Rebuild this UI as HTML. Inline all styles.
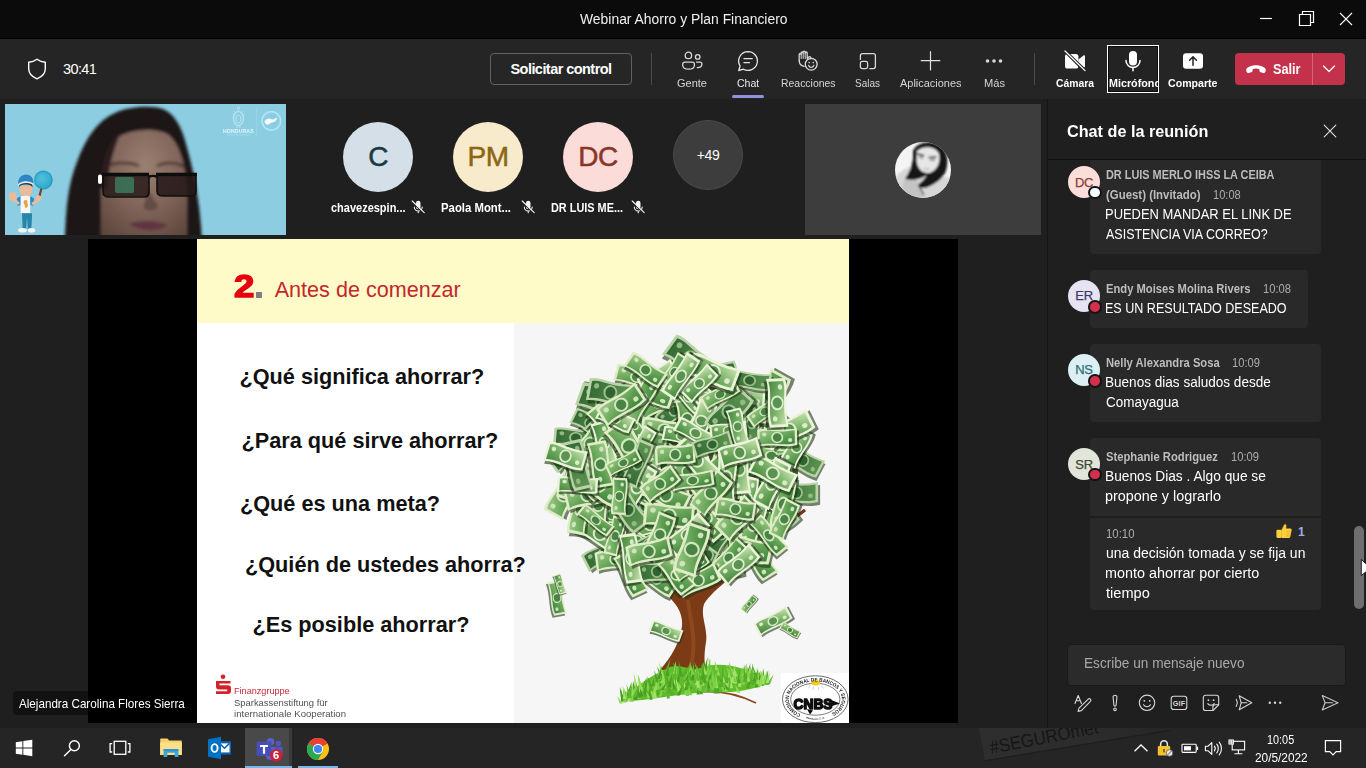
<!DOCTYPE html>
<html lang="es">
<head>
<meta charset="utf-8">
<title>Webinar Ahorro y Plan Financiero</title>
<style>
*{box-sizing:border-box;margin:0;padding:0}
html,body{width:1366px;height:768px;overflow:hidden;background:#1f1f1f}
body{font-family:"Liberation Sans",sans-serif;color:#fff;position:relative;-webkit-font-smoothing:antialiased}
.abs{position:absolute}
.t{position:absolute;white-space:nowrap;line-height:1}
#titlebar{left:0;top:0;width:1366px;height:38px;background:#0b0b0b}
#toolbar{left:0;top:38px;width:1366px;height:61px;background:#252525}
#stage{left:0;top:99px;width:1047px;height:629px;background:#1f1f1f}
#chat{left:1047px;top:99px;width:319px;height:629px;background:#1f1f1f;border-left:1px solid #141414}
#taskbar{left:0;top:728px;width:1366px;height:40px;background:#252525;overflow:hidden}
.tb-label{position:absolute;top:78.200px;font-size:11.500px;color:#d6d6d6;white-space:nowrap;line-height:1}
.tb-label.w{color:#fff;font-weight:bold}
.av{position:absolute;border-radius:50%;display:flex;align-items:center;justify-content:center}
.plabel{position:absolute;top:201px;font-size:13px;font-weight:bold;color:#fff;white-space:nowrap;line-height:1}
.bubble{position:absolute;background:#292929;border-radius:4px}
.mname{position:absolute;font-size:12.500px;font-weight:bold;color:#bdbdbd;white-space:nowrap;line-height:16px}
.mtime{position:absolute;font-size:12px;color:#adadad;white-space:nowrap;line-height:16px}
.mtext{position:absolute;font-size:14px;color:#fff;white-space:nowrap;line-height:20px}
.cav{position:absolute;width:32px;height:32px;border-radius:50%;font-size:13px;-webkit-text-stroke:.25px currentColor;display:flex;align-items:center;justify-content:center;letter-spacing:-0.3px}
.pres{position:absolute;width:9.500px;height:9.500px;border-radius:50%;border:2.200px solid #141414;box-sizing:content-box}
.q{position:absolute;font-weight:bold;color:#111;font-size:21.700px;white-space:nowrap;line-height:26px}
</style>
</head>
<body>
<!-- title bar -->
<div id="titlebar" class="abs">
  <div class="t" style="transform:scaleX(0.9925);transform-origin:0 50%;left:579.500px;top:12.200px;font-size:14px;color:#f0f0f0">Webinar Ahorro y Plan Financiero</div>
  <svg class="abs" style="left:1250px;top:0" width="116" height="38" viewBox="0 0 116 38" fill="none" stroke="#fff" stroke-width="1.2">
    <path d="M10 18.5h12"/>
    <path d="M49.5 14.5h11v11h-11z"/><path d="M52.500 14.500v-3h11v11h-3"/>
    <path d="M90 13l12 12M102 13l-12 12" stroke-width="1.1"/>
  </svg>
</div>
<!-- toolbar -->
<div id="toolbar" class="abs"></div>
<div class="abs" style="left:0;top:38px;width:1366px;height:1px;background:#000"></div>
<div class="abs" style="left:0;top:99px;width:1366px;height:1px;background:#1a1a1a"></div>
<svg class="abs" style="left:26px;top:57px" width="22" height="24" viewBox="0 0 22 24" fill="none" stroke="#fff" stroke-width="1.4" stroke-linejoin="round"><path d="M11 2.200c2.600 2 5.400 2.800 8.300 3v6.300c0 4.800-3.200 8.300-8.300 10.300c-5.100-2-8.300-5.500-8.300-10.300v-6.300c2.900-.2 5.700-1 8.300-3z"/></svg>
<div class="t" style="left:63px;top:62px;font-size:14.5px;color:#fff;letter-spacing:-0.6px">30:41</div>
<div class="abs" style="left:490px;top:53px;width:142px;height:32px;border:1px solid #616161;border-radius:4px;background:#262626"></div>
<div class="t" style="left:561px;top:62px;font-size:14.5px;font-weight:bold;color:#fff;transform:translateX(-50%);letter-spacing:-0.55px">Solicitar control</div>
<div class="abs" style="left:651px;top:53px;width:1px;height:32px;background:#4a4a4a"></div>
<div class="abs" style="left:1034px;top:53px;width:1px;height:32px;background:#4a4a4a"></div>
<!-- toolbar icons -->
<svg class="abs" style="left:680px;top:49px" width="24" height="24" viewBox="0 0 24 24" fill="none" stroke="#d8d8d8" stroke-width="1.3" stroke-linecap="round" stroke-linejoin="round">
  <circle cx="8.400" cy="6.400" r="3.200"/><circle cx="17.700" cy="7.900" r="2.300"/>
  <path d="M4.700 13.200h7.700a2 2 0 0 1 2 2v1c0 2.600-2.300 4-5.900 4s-5.800-1.400-5.800-4v-1a2 2 0 0 1 2-2z"/>
  <path d="M16.600 13.200h3.600a1.700 1.700 0 0 1 1.700 1.700c0 2.400-1.600 3.800-4.600 3.700"/>
</svg>
<div class="tb-label" style="transform:scaleX(0.9576);transform-origin:0 50%;left:677px">Gente</div>
<svg class="abs" style="left:736px;top:49px" width="24" height="24" viewBox="0 0 24 24" fill="none" stroke="#e4e4e4" stroke-width="1.3" stroke-linecap="round" stroke-linejoin="round">
  <path d="M12 2.600a9.400 9.400 0 1 1-4.600 17.600l-4.700 1.300l1.400-4.500A9.400 9.400 0 0 1 12 2.600z"/>
  <path d="M8 9.700h8.200M8 13.700h5.400"/>
</svg>
<div class="tb-label" style="transform:scaleX(0.9178);transform-origin:0 50%;left:736.700px;color:#e8e8e8">Chat</div>
<div class="abs" style="left:732px;top:95px;width:32px;height:3px;background:#9092e0;border-radius:1.500px"></div>
<svg class="abs" style="left:796px;top:49px" width="24" height="24" viewBox="0 0 24 24" fill="none" stroke="#d8d8d8" stroke-width="1.300" stroke-linecap="round" stroke-linejoin="round">
  <path d="M3.200 11.500v-6a1 1 0 0 1 2 0v-1.500a1 1 0 0 1 2 0v-.8a1 1 0 0 1 2 0v.8a1 1 0 0 1 2 0v5.500l1.600-1.500a1.300 1.300 0 0 1 1.900 1.700" />
  <path d="M3.200 11.500c0 3 1.800 5.300 5 5.800"/>
  <path d="M5.200 5.500v4M7.200 4v5.500M9.200 4v5.500" stroke-width="1"/>
  <circle cx="15.200" cy="15.200" r="5.900"/>
  <path d="M12.600 16.400c.6 1.300 1.500 1.900 2.600 1.900s2-.6 2.600-1.900"/>
  <circle cx="13.200" cy="13.600" r=".8" fill="#d8d8d8" stroke="none"/><circle cx="17.200" cy="13.600" r=".8" fill="#d8d8d8" stroke="none"/>
</svg>
<div class="tb-label" style="transform:scaleX(0.9069);transform-origin:0 50%;left:780.500px">Reacciones</div>
<svg class="abs" style="left:856px;top:49px" width="24" height="24" viewBox="0 0 24 24" fill="none" stroke="#d8d8d8" stroke-width="1.300" stroke-linecap="round" stroke-linejoin="round">
  <path d="M4.400 10.400v-3.800a2 2 0 0 1 2-2h11a2 2 0 0 1 2 2v11a2 2 0 0 1-2 2h-3.600"/>
  <rect x="4.400" y="12.400" width="7.200" height="7.200" rx="1.800"/>
</svg>
<div class="tb-label" style="transform:scaleX(0.8686);transform-origin:0 50%;left:855px">Salas</div>
<svg class="abs" style="left:918px;top:49px" width="24" height="24" viewBox="0 0 24 24" fill="none" stroke="#e0e0e0" stroke-width="1.200" stroke-linecap="round"><path d="M12.500 2.500v18.500M3.200 11.700h18.600"/></svg>
<div class="tb-label" style="transform:scaleX(0.9523);transform-origin:0 50%;left:900px">Aplicaciones</div>
<svg class="abs" style="left:982px;top:49px" width="24" height="24" viewBox="0 0 24 24" fill="#d8d8d8"><circle cx="5.500" cy="12" r="1.800"/><circle cx="12" cy="12" r="1.800"/><circle cx="18.500" cy="12" r="1.800"/></svg>
<div class="tb-label" style="transform:scaleX(0.9662);transform-origin:0 50%;left:983.500px">Más</div>
<!-- camera off -->
<svg class="abs" style="left:1063px;top:49px" width="24" height="24" viewBox="0 0 24 24">
  <rect x="2" y="5" width="13.400" height="14.600" rx="2.600" fill="#fff"/>
  <path d="M15.400 10.500l5.400-4.200c.5-.4 1.200 0 1.200.6v10.800c0 .6-.7 1-1.200.6l-5.400-4.200z" fill="#fff"/>
  <path d="M1.600 1.600l20.600 20.400" stroke="#252525" stroke-width="3.400"/>
  <path d="M2 2l20 19.600" stroke="#fff" stroke-width="1.300" stroke-linecap="round"/>
</svg>
<div class="tb-label w" style="transform:scaleX(0.9004);transform-origin:0 50%;left:1056px">Cámara</div>
<!-- mic box -->
<div class="abs" style="left:1107px;top:45px;width:52px;height:48px;border:1px solid #fff;background:#232323;box-shadow:inset 0 0 0 1px #0b0b0b;overflow:hidden">
  <div class="tb-label w" style="transform:scaleX(0.9356);transform-origin:0 50%;left:.5px;top:32.200px">Micrófono</div>
</div>
<svg class="abs" style="left:1121px;top:49px" width="24" height="24" viewBox="0 0 24 24" fill="none">
  <rect x="8" y="2" width="8" height="14.600" rx="4" fill="#fff"/>
  <path d="M5 11.500a7 7 0 0 0 14 0" stroke="#fff" stroke-width="1.500" stroke-linecap="round"/>
  <path d="M12 18.500v3.200" stroke="#fff" stroke-width="1.500" stroke-linecap="round"/>
</svg>
<!-- share -->
<svg class="abs" style="left:1181px;top:49px" width="24" height="24" viewBox="0 0 24 24">
  <rect x="2" y="4.200" width="20" height="15.600" rx="3" fill="#fff"/>
  <path d="M12 16.200v-8.200M8.600 11.200l3.400-3.400l3.400 3.400" stroke="#252525" stroke-width="1.500" fill="none" stroke-linecap="round" stroke-linejoin="round"/>
</svg>
<div class="tb-label w" style="transform:scaleX(0.9220);transform-origin:0 50%;left:1168px">Comparte</div>
<!-- leave -->
<div class="abs" style="left:1235px;top:53px;width:110px;height:32px;background:#c4314b;border-radius:4px"></div>
<div class="abs" style="left:1312px;top:53px;width:1px;height:32px;background:#d4667a"></div>
<svg class="abs" style="left:1245px;top:61px" width="22" height="18" viewBox="0 0 22 18" fill="#fff"><path d="M1.300 9.800c-.5-1.500.4-3 2.300-3.900c4.500-2.100 10.300-2.100 14.800 0c1.900.9 2.800 2.400 2.300 3.900l-.4 1.100c-.3.800-1.100 1.200-1.900 1l-2.700-.7c-.7-.2-1.200-.8-1.300-1.500l-.2-1.600c-2-.7-4.400-.7-6.400 0l-.2 1.600c-.1.700-.6 1.300-1.300 1.500l-2.700.7c-.8.200-1.600-.2-1.900-1z"/></svg>
<div class="t" style="transform:scaleX(0.9058);transform-origin:0 50%;left:1273px;top:62.250px;font-size:14px;font-weight:bold;color:#fff">Salir</div>
<svg class="abs" style="left:1322px;top:63px" width="14" height="12" viewBox="0 0 14 12" fill="none" stroke="#fff" stroke-width="1.300" stroke-linecap="round" stroke-linejoin="round"><path d="M1.500 3l5.500 5.500l5.500-5.500"/></svg>
<div id="stage" class="abs"></div>
<!-- webcam tile -->
<svg class="abs" style="left:5px;top:104px" width="281" height="131" viewBox="0 0 281 131">
  <defs>
    <filter id="bl" x="-10%" y="-10%" width="120%" height="120%"><feGaussianBlur stdDeviation="1.600"/></filter>
    <filter id="bl2" x="-20%" y="-20%" width="140%" height="140%"><feGaussianBlur stdDeviation="0.700"/></filter>
    <clipPath id="vc"><rect width="281" height="131"/></clipPath>
    <radialGradient id="fg" cx="0.52" cy="0.32" r="0.8"><stop offset="0" stop-color="#9a8070"/><stop offset=".5" stop-color="#80645a"/><stop offset="1" stop-color="#5c443c"/></radialGradient>
    <radialGradient id="bal" cx="0.4" cy="0.4" r="0.7"><stop offset="0" stop-color="#52bfdc"/><stop offset="1" stop-color="#2fa8cc"/></radialGradient>
  </defs>
  <rect width="281" height="131" fill="#8ccde1"/>
  <g clip-path="url(#vc)">
  <g filter="url(#bl)">
    <path d="M60 136C61 100 64 78 72 58C80 36 92 16 112 8C124 3 146 1 158 5C170 10 177 24 181 40C188 64 195 96 197 136z" fill="#1e1618"/>
    <path d="M96 136V80C97 60 102 44 112 34C124 25 152 23 164 31C176 42 180 62 182 84V136z" fill="url(#fg)"/>
    <path d="M96 84C96 56 102 38 116 28C108 46 104 62 102 86z" fill="#2a1e1f"/>
    <path d="M102 62C110 58 126 58 134 62M152 62C160 58 172 58 180 63" stroke="#3a2826" stroke-width="3" fill="none" opacity=".7"/>
    <path d="M124 120C134 116 152 116 162 121C156 128 134 128 124 120z" fill="#5e3540"/>
    <path d="M142 84C142 96 136 102 140 105C146 108 152 106 153 102z" fill="#4a3430" opacity=".55"/>
  </g>
  <g filter="url(#bl2)">
    <path d="M98 71h46v17c0 3-2 4.500-5 4.500H104c-4 0-6-2-6-5z" fill="#231b1a" opacity=".82"/>
    <path d="M152 71h39v16c0 3-2 5-5 5H158c-4 0-6-2-6-5z" fill="#231b1a" opacity=".86"/>
    <path d="M97 70.500h47M151 70.500h41" stroke="#0f0c0c" stroke-width="3.400"/>
    <path d="M98 71v17c0 3 2 5 6 5h35c3 0 5-1.500 5-4.500V71M152 71v16c0 3 2 5 6 5h28c3 0 5-2 5-5V71" stroke="#120e0e" stroke-width="1.600" fill="none"/>
    <path d="M144 73c2-1.500 6-1.500 8 0" stroke="#0f0c0c" stroke-width="2.400" fill="none"/>
    <rect x="110" y="73" width="19" height="16" rx="2" fill="#3f9a70" opacity=".62"/>
    <rect x="93" y="70.500" width="4" height="9.500" rx="2" fill="#fff"/>
  </g>
  <!-- mascot -->
  <g filter="url(#bl2)">
    <circle cx="38.400" cy="76" r="9.400" fill="#2a9dc2"/>
    <circle cx="38.400" cy="76" r="8" fill="url(#bal)"/>
    <path d="M36.200 85.500l-1.600 6" stroke="#7a3f22" stroke-width="2.200" stroke-linecap="round"/>
    <path d="M14.500 82c-.5 4 .5 8 3 10.200c2 1.600 5 1.600 7 0c2.400-2.200 3.300-6.200 2.800-10.200z" fill="#e9bb9c"/>
    <path d="M14 83.500c0-2.500 .5-4 1.500-5h10.500c1 1 1.500 2.500 1.500 5c-1-2-2.500-3-6.800-3s-5.700 1-6.700 3z" fill="#4a2e22"/>
    <path d="M13.200 80c-.6-6 3.500-9.500 8-9.500s7.800 3.500 7 9c-2-1.600-5-2.300-8-2.200c-3 0-5.400 1-7 2.700z" fill="#2e86c4"/>
    <path d="M12.800 80.800c2-2.400 5-3.400 8-3.400s5.600.8 7.600 2.400l-.3 1.200c-2-1.300-4.500-1.900-7.300-1.900c-3 0-5.600.9-7.400 2.800z" fill="#e8f2fa"/>
    <path d="M12 94.500c1.400-1.400 2.600-1.800 3.800-1.800v8l-3 1.200c-1-2.500-1.300-5-.8-7.400zM28.800 94.500c-1.400-1.400-2.600-1.800-3.800-1.800v8l3 1.200c1-2.500 1.300-5 .8-7.400z" fill="#2e86c4"/>
    <path d="M15.600 92.600c3-1 6.600-1 9.600 0v16.700h-9.600z" fill="#f6f6f6"/>
    <path d="M19.200 96.500c2-1.500 4 .2 3 2.400c1.400 1.400 .8 4.400-1.200 5c-1.600-.4-1-2.600-1.800-3.800c-.8-1.200-.8-2.600 0-3.600z" fill="#e9a23b"/>
    <path d="M13 99l-6-5.500" stroke="#e9bb9c" stroke-width="3" stroke-linecap="round"/>
    <ellipse cx="7.800" cy="92.600" rx="4" ry="4.600" fill="#e9bb9c"/>
    <path d="M28 99.500l5-3.500" stroke="#e9bb9c" stroke-width="3" stroke-linecap="round"/>
    <circle cx="33.500" cy="94" r="2.800" fill="#e9bb9c"/>
    <path d="M17 109.300h10v3l-.6 12.500h-3.600l-.8-11l-.8 11h-3.600z" fill="#2a85aa"/>
    <ellipse cx="17.400" cy="126.300" rx="4.300" ry="2.300" fill="#f4f4f4"/><ellipse cx="26.600" cy="126.300" rx="3.600" ry="2.300" fill="#f4f4f4"/>
  </g>
  </g>
  <!-- logos -->
  <g filter="url(#bl2)">
  <g fill="none" stroke="#d6f6ff" opacity=".6">
    <path d="M233.400 2.500l1.400 2.500l-1.400 1.500l-1.400-1.500z" stroke-width=".8"/>
    <path d="M229 7l1 1.500M238 7l-1 1.500M227.500 10.500l1.500.8M239.500 10.500l-1.500.8" stroke-width=".7"/>
    <ellipse cx="233.400" cy="14.500" rx="5" ry="7" stroke-width="1.200"/>
    <ellipse cx="233.400" cy="15" rx="2.600" ry="4" stroke-width=".9"/>
    <path d="M231 23h5" stroke-width=".8"/>
    <path d="M251.600 4v27" stroke-width=".6" opacity=".6"/>
  </g>
  <circle cx="266.300" cy="16.900" r="9.300" fill="none" stroke="#b4ecfa" stroke-width="1.700" opacity=".85"/>
  <path d="M259.500 17.500c1.500-3 4-3.600 6-2.600s3.500.4 6.500-1.400c0 2.400-1.500 4.200-4 4.800s-3.500 1.800-5 2.400s-3-1.200-3.500-3.200z" fill="#fff" opacity=".9"/>
  </g>
  <text x="233.400" y="28.700" font-family="Liberation Sans, sans-serif" font-weight="bold" font-size="5.200" fill="#e9fbff" text-anchor="middle" letter-spacing=".1" opacity=".9">HONDURAS</text>
  <rect x="222" y="30.600" width="23" height=".7" fill="#d6f6ff" opacity=".5"/>
</svg>
<!-- participants -->
<div class="av" style="left:343px;top:122px;width:70px;height:70px;background:#d4dfe8"><span style="font-size:28px;color:#173c44;letter-spacing:-.5px;-webkit-text-stroke:.5px #173c44">C</span></div>
<div class="av" style="left:453px;top:122px;width:70px;height:70px;background:#f8ebcb"><span style="font-size:28px;color:#8b6614;letter-spacing:-.5px;-webkit-text-stroke:.5px #8b6614">PM</span></div>
<div class="av" style="left:563px;top:122px;width:70px;height:70px;background:#fbdcd8"><span style="font-size:28px;color:#8a3528;letter-spacing:-.5px;-webkit-text-stroke:.5px #8a3528">DC</span></div>
<div class="av" style="left:673px;top:120px;width:70px;height:70px;background:#3d3d3d;border:1px solid #4a4a4a"><span style="font-size:14px;color:#fff;letter-spacing:-.4px">+49</span></div>
<div class="plabel" style="transform:scaleX(0.8451);transform-origin:0 50%;left:330.500px">chavezespin...</div>
<div class="plabel" style="transform:scaleX(0.8731);transform-origin:0 50%;left:440.500px">Paola Mont...</div>
<div class="plabel" style="transform:scaleX(0.8377);transform-origin:0 50%;left:550.500px">DR LUIS ME...</div>
<svg width="0" height="0" style="position:absolute"><defs>
  <g id="micoff" fill="none" stroke="#f0f0f0" stroke-width="1.100" stroke-linecap="round">
    <rect x="5" y=".700" width="4.500" height="8.600" rx="2.250" fill="#f4f4f4" stroke="none"/>
    <path d="M3.300 7a3.950 3.950 0 0 0 7.900 0M7.250 11.200v1.600"/>
    <path d="M.5 1.600l12.200 11.750" stroke="#1f1f1f" stroke-width="1.300"/>
    <path d="M1.200 1l12 11.600" stroke-width="1.150"/>
  </g></defs></svg>
<svg class="abs" style="left:411px;top:200px" width="16" height="16" viewBox="0 0 16 16"><use href="#micoff"/></svg>
<svg class="abs" style="left:521px;top:200px" width="16" height="16" viewBox="0 0 16 16"><use href="#micoff"/></svg>
<svg class="abs" style="left:631px;top:200px" width="16" height="16" viewBox="0 0 16 16"><use href="#micoff"/></svg>
<!-- avatar tile -->
<div class="abs" style="left:805px;top:104px;width:236px;height:131px;background:#3d3d3d"></div>
<svg class="abs" style="left:895px;top:142px" width="56" height="56" viewBox="0 0 56 56">
  <defs><clipPath id="pc"><circle cx="28" cy="28" r="28"/></clipPath>
  <filter id="bl3" x="-20%" y="-20%" width="140%" height="140%"><feGaussianBlur stdDeviation="0.900"/></filter></defs>
  <g clip-path="url(#pc)">
    <rect width="56" height="56" fill="#f4f4f4"/>
    <g filter="url(#bl3)">
      <path d="M0 36C6 28 14 24 20 24L34 32L56 36V56H0z" fill="#d6d6d6"/>
      <path d="M8 40C14 34 22 36 26 44L30 56H6z" fill="#c4c4c4"/>
      <path d="M18 9C22 0 38 -3 47 5C54 12 53 24 50 31C46 38 40 42 33 45C28 47 24 46 23 43C26 40 30 37 32 33C26 37 18 39 10 37C14 31 17 24 18 17z" fill="#141414"/>
      <path d="M22 9C28 3 41 4 44 12C46 20 42 29 34 31C27 32 22 26 21.500 18z" fill="#e6e6e6"/>
      <path d="M23 12l5.500 1.600M34 15.500l6.500-.3" stroke="#1c1c1c" stroke-width="1.700" stroke-linecap="round"/>
      <path d="M24.500 15l3 .8M35.500 18l4-.2" stroke="#444" stroke-width="1.200" stroke-linecap="round"/>
      <path d="M29 26.500c2 1 4 1 5.500 .3" stroke="#999" stroke-width="1" fill="none"/>
      <path d="M24 44l5 9" stroke="#3a3a3a" stroke-width="1.300"/>
    </g>
  </g>
</svg>
<!-- shared content -->
<div class="abs" style="left:88px;top:239px;width:870px;height:484px;background:#000"></div>
<div class="abs" style="left:197px;top:239px;width:652px;height:484px;background:#fff"></div>
<div class="abs" style="left:197px;top:239px;width:652px;height:84px;background:#fffbc8"></div>
<div class="abs" style="left:513.500px;top:323px;width:335.500px;height:400px;background:#f6f6f6"></div>
<svg class="abs" style="left:514px;top:323px" width="335" height="400" viewBox="0 0 335 400">
<defs><linearGradient id="bg1" x1="0" y1="0" x2="1" y2="1"><stop offset="0" stop-color="#9ccb86"/><stop offset=".5" stop-color="#68a659"/><stop offset="1" stop-color="#3a7f38"/></linearGradient><linearGradient id="bg2" x1="0" y1="1" x2="1" y2="0"><stop offset="0" stop-color="#46883f"/><stop offset=".55" stop-color="#7cb46a"/><stop offset="1" stop-color="#c6e2ae"/></linearGradient><linearGradient id="bg3" x1="0" y1="0" x2="1" y2="0"><stop offset="0" stop-color="#356b35"/><stop offset="1" stop-color="#5b9350"/></linearGradient><g id="bill"><path d="M-17 -7.500C-9 -10.500 -2 -5.500 17 -8.500V7.500C6 10.500 -6 5.500 -17 8.500z" fill="#1a3314" opacity=".6" transform="translate(1.600 2.200)"/><path d="M-17 -7.500C-9 -10.500 -2 -5.500 17 -8.500V7.500C6 10.500 -6 5.500 -17 8.500z" fill="#e0ecc6"/><path d="M-15 -5.800C-8 -8.300 -2 -3.800 15 -6.600V5.800C6 8.400 -6 3.800 -15 6.600z" fill="url(#bg1)"/><ellipse cx="0" cy="0" rx="5.200" ry="5.400" fill="#d3e6bf"/><ellipse cx="0" cy="0" rx="3.700" ry="4" fill="#4a8444"/><circle cx="-11" cy="-3" r="1.900" fill="#cfe3bb"/><circle cx="11" cy="2.500" r="1.900" fill="#cfe3bb"/></g><g id="bill2"><path d="M-17 -7.500C-9 -10.500 -2 -5.500 17 -8.500V7.500C6 10.500 -6 5.500 -17 8.500z" fill="#1a3314" opacity=".6" transform="translate(1.600 2.200)"/><path d="M-17 -7.500C-9 -10.500 -2 -5.500 17 -8.500V7.500C6 10.500 -6 5.500 -17 8.500z" fill="#ebf3d8"/><path d="M-15 -5.800C-8 -8.300 -2 -3.800 15 -6.600V5.800C6 8.400 -6 3.800 -15 6.600z" fill="url(#bg2)"/><ellipse cx="0" cy="0" rx="5.200" ry="5.400" fill="#deecce"/><ellipse cx="0" cy="0" rx="3.700" ry="4" fill="#5a9350"/><circle cx="-11" cy="-3" r="1.900" fill="#dbeacb"/><circle cx="11" cy="2.500" r="1.900" fill="#dbeacb"/></g><g id="bill3"><path d="M-17 -7.500C-9 -10.500 -2 -5.500 17 -8.500V7.500C6 10.500 -6 5.500 -17 8.500z" fill="#1a3314" opacity=".6" transform="translate(1.600 2.200)"/><path d="M-17 -7.500C-9 -10.500 -2 -5.500 17 -8.500V7.500C6 10.500 -6 5.500 -17 8.500z" fill="#b9d3a6"/><path d="M-15 -5.800C-8 -8.300 -2 -3.800 15 -6.600V5.800C6 8.400 -6 3.800 -15 6.600z" fill="url(#bg3)"/><ellipse cx="0" cy="0" rx="5.200" ry="5.400" fill="#9dc08c"/><ellipse cx="0" cy="0" rx="3.700" ry="4" fill="#2f6331"/><circle cx="-11" cy="-3" r="1.900" fill="#94b884"/><circle cx="11" cy="2.500" r="1.900" fill="#94b884"/></g><filter id="tb" x="-5%" y="-5%" width="110%" height="110%"><feGaussianBlur stdDeviation="0.550"/></filter></defs>
<g filter="url(#tb)">
<path d="M186.0 369.0C208.0 367.0 226.0 372.0 242.0 380.0" stroke="#8a4a1e" stroke-width="1.600" fill="none"/>
<path d="M146.0 347.0C158.0 333.0 166.0 319.0 168.0 303.0C169.0 289.0 162.0 281.0 154.0 273.0C142.0 261.0 122.0 249.0 92.0 233.0L96.0 225.0C126.0 237.0 148.0 247.0 166.0 259.0C170.0 243.0 176.0 225.0 178.0 197.0L186.0 197.0C186.0 225.0 184.0 243.0 184.0 261.0C198.0 249.0 222.0 237.0 256.0 217.0L260.0 225.0C230.0 245.0 202.0 263.0 190.0 281.0C186.0 293.0 194.0 305.0 192.0 319.0C190.0 331.0 190.0 339.0 192.0 349.0z" fill="#7a3a14"/>
<path d="M176.0 345.0C184.0 321.0 176.0 297.0 174.0 277.0" stroke="#9a5424" stroke-width="4" fill="none" opacity=".6"/>
<path d="M106.0 379.0C116.0 367.0 136.0 353.0 154.0 345.0C166.0 339.0 176.0 349.0 186.0 345.0C206.0 337.0 236.0 345.0 256.0 359.0C242.0 367.0 216.0 371.0 192.0 369.0C166.0 371.0 136.0 377.0 106.0 379.0z" fill="#5fbd2c"/>
<path d="M172.3 361.6L173.6 345.4L175.7 361.6z" fill="#7ed047"/>
<path d="M132.6 368.2L137.3 354.9L136.0 368.2z" fill="#6cc437"/>
<path d="M171.4 350.7L177.0 338.3L174.8 350.7z" fill="#5cb82e"/>
<path d="M193.4 356.5L197.5 344.9L196.8 356.5z" fill="#4da324"/>
<path d="M197.5 366.8L194.6 359.2L200.9 366.8z" fill="#7ed047"/>
<path d="M194.0 365.6L196.7 355.3L197.4 365.6z" fill="#7ed047"/>
<path d="M182.1 363.0L185.5 351.0L185.5 363.0z" fill="#4a9c22"/>
<path d="M202.2 356.6L208.2 344.1L205.6 356.6z" fill="#6cc437"/>
<path d="M210.1 354.4L209.6 345.1L213.5 354.4z" fill="#6cc437"/>
<path d="M188.6 349.6L188.3 341.5L192.0 349.6z" fill="#6cc437"/>
<path d="M247.1 362.4L245.9 355.4L250.5 362.4z" fill="#5cb82e"/>
<path d="M174.9 372.3L172.3 361.3L178.3 372.3z" fill="#7ed047"/>
<path d="M220.5 353.6L220.5 345.7L223.9 353.6z" fill="#a4e36a"/>
<path d="M217.5 349.7L215.2 340.3L220.9 349.7z" fill="#5cb82e"/>
<path d="M174.1 359.6L172.7 345.8L177.5 359.6z" fill="#7ed047"/>
<path d="M251.1 361.4L251.7 350.2L254.5 361.4z" fill="#a4e36a"/>
<path d="M167.6 352.7L174.0 343.0L171.0 352.7z" fill="#58ad2b"/>
<path d="M253.0 360.5L259.6 351.6L256.4 360.5z" fill="#6cc437"/>
<path d="M111.5 374.2L108.3 362.8L114.9 374.2z" fill="#93dc55"/>
<path d="M228.2 357.6L227.0 349.9L231.6 357.6z" fill="#7ed047"/>
<path d="M107.6 377.9L105.6 364.7L111.0 377.9z" fill="#4a9c22"/>
<path d="M228.5 353.1L231.5 342.3L231.9 353.1z" fill="#58ad2b"/>
<path d="M239.7 363.5L238.3 354.0L243.1 363.5z" fill="#7ed047"/>
<path d="M207.0 356.1L204.5 344.3L210.4 356.1z" fill="#5cb82e"/>
<path d="M120.7 366.4L119.8 349.8L124.1 366.4z" fill="#a4e36a"/>
<path d="M143.3 372.2L143.0 359.2L146.7 372.2z" fill="#4da324"/>
<path d="M242.8 364.3L244.3 356.0L246.2 364.3z" fill="#6cc437"/>
<path d="M146.8 373.9L143.6 364.9L150.2 373.9z" fill="#58ad2b"/>
<path d="M166.2 353.7L165.7 346.2L169.6 353.7z" fill="#4da324"/>
<path d="M118.9 368.9L119.0 357.4L122.3 368.9z" fill="#4da324"/>
<path d="M192.6 369.1L192.9 357.4L196.0 369.1z" fill="#58ad2b"/>
<path d="M247.8 358.5L249.3 345.1L251.2 358.5z" fill="#58ad2b"/>
<path d="M152.5 375.4L154.7 367.6L155.9 375.4z" fill="#5cb82e"/>
<path d="M238.5 362.8L243.2 348.8L241.9 362.8z" fill="#93dc55"/>
<path d="M157.4 366.1L162.8 350.0L160.8 366.1z" fill="#a4e36a"/>
<path d="M245.0 357.5L241.9 345.5L248.4 357.5z" fill="#a4e36a"/>
<path d="M161.4 347.3L159.0 339.6L164.8 347.3z" fill="#6cc437"/>
<path d="M252.3 361.4L252.9 347.1L255.7 361.4z" fill="#4a9c22"/>
<path d="M170.5 369.0L174.7 361.2L173.9 369.0z" fill="#5cb82e"/>
<path d="M151.2 350.1L157.5 342.8L154.6 350.1z" fill="#6cc437"/>
<path d="M178.9 362.6L178.2 346.4L182.3 362.6z" fill="#5cb82e"/>
<path d="M159.8 350.9L161.6 337.8L163.2 350.9z" fill="#93dc55"/>
<path d="M203.0 357.4L202.9 341.5L206.4 357.4z" fill="#58ad2b"/>
<path d="M134.7 365.9L140.5 350.8L138.1 365.9z" fill="#7ed047"/>
<path d="M162.2 362.9L160.3 352.7L165.6 362.9z" fill="#4a9c22"/>
<path d="M157.2 371.9L154.6 364.5L160.6 371.9z" fill="#58ad2b"/>
<path d="M226.9 352.2L232.9 340.5L230.3 352.2z" fill="#a4e36a"/>
<path d="M161.9 361.2L165.8 347.5L165.3 361.2z" fill="#4a9c22"/>
<path d="M152.7 370.5L155.5 360.7L156.1 370.5z" fill="#58ad2b"/>
<path d="M189.7 354.4L186.6 339.5L193.1 354.4z" fill="#4da324"/>
<path d="M165.3 352.1L164.6 337.4L168.7 352.1z" fill="#4da324"/>
<path d="M223.2 369.7L221.0 361.5L226.6 369.7z" fill="#93dc55"/>
<path d="M247.2 361.6L248.6 352.6L250.6 361.6z" fill="#4da324"/>
<path d="M211.0 364.7L208.1 352.3L214.4 364.7z" fill="#7ed047"/>
<path d="M145.6 359.6L147.5 345.6L149.0 359.6z" fill="#4da324"/>
<path d="M163.5 368.5L161.1 352.4L166.9 368.5z" fill="#a4e36a"/>
<path d="M124.5 370.0L130.3 356.8L127.9 370.0z" fill="#a4e36a"/>
<path d="M186.7 362.9L191.6 350.9L190.1 362.9z" fill="#93dc55"/>
<path d="M173.9 363.9L177.8 354.8L177.3 363.9z" fill="#6cc437"/>
<path d="M136.9 375.1L143.3 358.3L140.3 375.1z" fill="#93dc55"/>
<path d="M144.1 369.4L145.8 362.3L147.5 369.4z" fill="#5cb82e"/>
<path d="M170.6 361.5L172.1 346.8L174.0 361.5z" fill="#5cb82e"/>
<path d="M137.6 374.2L134.7 362.9L141.0 374.2z" fill="#93dc55"/>
<path d="M206.9 368.5L213.6 356.8L210.3 368.5z" fill="#4a9c22"/>
<path d="M245.3 360.5L242.8 344.0L248.7 360.5z" fill="#7ed047"/>
<path d="M170.3 361.7L172.6 346.4L173.7 361.7z" fill="#4da324"/>
<path d="M182.7 368.0L182.5 355.4L186.1 368.0z" fill="#a4e36a"/>
<path d="M246.6 362.6L246.4 349.5L250.0 362.6z" fill="#4da324"/>
<path d="M248.6 360.8L247.3 348.1L252.0 360.8z" fill="#6cc437"/>
<path d="M179.8 362.3L186.2 355.0L183.2 362.3z" fill="#a4e36a"/>
<path d="M185.8 371.3L183.4 363.0L189.2 371.3z" fill="#4da324"/>
<path d="M115.1 375.4L121.3 364.3L118.5 375.4z" fill="#a4e36a"/>
<path d="M145.1 363.0L146.2 354.7L148.5 363.0z" fill="#4a9c22"/>
<path d="M183.0 349.7L180.0 338.5L186.4 349.7z" fill="#58ad2b"/>
<path d="M124.5 375.2L123.1 367.9L127.9 375.2z" fill="#7ed047"/>
<path d="M107.1 377.9L106.2 363.7L110.5 377.9z" fill="#4a9c22"/>
<path d="M120.8 375.5L122.6 367.3L124.2 375.5z" fill="#58ad2b"/>
<path d="M211.5 363.4L208.5 347.6L214.9 363.4z" fill="#a4e36a"/>
<path d="M227.4 361.8L232.8 349.5L230.8 361.8z" fill="#7ed047"/>
<path d="M183.7 368.1L189.0 355.0L187.1 368.1z" fill="#7ed047"/>
<path d="M240.7 361.5L239.2 351.1L244.1 361.5z" fill="#93dc55"/>
<path d="M237.1 356.5L235.8 341.7L240.5 356.5z" fill="#6cc437"/>
<path d="M125.1 366.4L124.4 352.1L128.5 366.4z" fill="#6cc437"/>
<path d="M169.6 371.8L173.4 359.4L173.0 371.8z" fill="#7ed047"/>
<path d="M164.9 365.5L163.6 358.3L168.3 365.5z" fill="#93dc55"/>
<path d="M240.2 364.9L241.9 356.8L243.6 364.9z" fill="#93dc55"/>
<path d="M179.7 364.3L177.1 355.4L183.1 364.3z" fill="#6cc437"/>
<path d="M108.9 379.2L114.6 366.1L112.3 379.2z" fill="#4a9c22"/>
<path d="M127.0 364.6L132.1 355.5L130.4 364.6z" fill="#58ad2b"/>
<path d="M242.5 357.1L248.7 349.4L245.9 357.1z" fill="#4a9c22"/>
<path d="M116.8 370.0L117.8 359.1L120.2 370.0z" fill="#93dc55"/>
<path d="M169.0 362.9L172.7 355.8L172.4 362.9z" fill="#7ed047"/>
<path d="M132.1 367.3L132.9 352.9L135.5 367.3z" fill="#7ed047"/>
<path d="M194.8 349.3L194.8 334.3L198.2 349.3z" fill="#6cc437"/>
<path d="M224.0 363.8L226.9 348.2L227.4 363.8z" fill="#a4e36a"/>
<path d="M189.6 351.6L189.7 338.8L193.0 351.6z" fill="#58ad2b"/>
<path d="M146.7 353.2L145.0 338.8L150.1 353.2z" fill="#a4e36a"/>
<path d="M125.0 367.9L125.4 355.5L128.4 367.9z" fill="#a4e36a"/>
<path d="M218.6 356.4L216.0 342.2L222.0 356.4z" fill="#93dc55"/>
<path d="M150.0 351.1L156.6 335.2L153.4 351.1z" fill="#5cb82e"/>
<path d="M139.7 375.6L139.7 362.0L143.1 375.6z" fill="#a4e36a"/>
<path d="M189.6 359.8L196.3 348.9L193.0 359.8z" fill="#7ed047"/>
<path d="M209.1 364.9L206.0 348.1L212.5 364.9z" fill="#6cc437"/>
<path d="M214.6 353.0L211.8 342.0L218.0 353.0z" fill="#7ed047"/>
<path d="M201.2 347.3L200.7 337.7L204.6 347.3z" fill="#93dc55"/>
<path d="M186.7 359.4L189.1 342.7L190.1 359.4z" fill="#6cc437"/>
<path d="M199.7 366.2L202.4 358.4L203.1 366.2z" fill="#5cb82e"/>
<path d="M162.5 372.5L168.9 361.7L165.9 372.5z" fill="#4a9c22"/>
<path d="M185.5 361.6L187.2 350.4L188.9 361.6z" fill="#58ad2b"/>
<path d="M183.3 361.8L182.8 351.2L186.7 361.8z" fill="#58ad2b"/>
<path d="M188.3 353.9L187.9 339.7L191.7 353.9z" fill="#5cb82e"/>
<path d="M219.6 360.6L220.4 347.3L223.0 360.6z" fill="#a4e36a"/>
<path d="M113.1 374.5L115.6 363.5L116.5 374.5z" fill="#93dc55"/>
<path d="M116.2 378.7L117.7 367.4L119.6 378.7z" fill="#7ed047"/>
<path d="M112.0 373.5L117.8 358.4L115.4 373.5z" fill="#4da324"/>
<path d="M250.2 361.7L248.0 348.7L253.6 361.7z" fill="#a4e36a"/>
<path d="M172.7 352.3L174.7 344.8L176.1 352.3z" fill="#6cc437"/>
<path d="M159.1 350.9L161.8 339.7L162.5 350.9z" fill="#a4e36a"/>
<path d="M159.2 367.5L157.2 352.4L162.6 367.5z" fill="#58ad2b"/>
<path d="M214.0 352.6L219.6 344.4L217.4 352.6z" fill="#93dc55"/>
<path d="M146.0 366.2L149.7 351.9L149.4 366.2z" fill="#7ed047"/>
<path d="M199.0 364.9L198.2 356.0L202.4 364.9z" fill="#7ed047"/>
<path d="M235.4 353.9L234.8 346.3L238.8 353.9z" fill="#a4e36a"/>
<path d="M109.3 375.2L108.8 366.0L112.7 375.2z" fill="#6cc437"/>
<path d="M240.4 357.0L246.9 347.7L243.8 357.0z" fill="#4a9c22"/>
<path d="M176.1 352.4L180.3 342.0L179.5 352.4z" fill="#6cc437"/>
<path d="M224.0 358.3L229.1 343.1L227.4 358.3z" fill="#7ed047"/>
<path d="M171.1 366.6L169.3 355.7L174.5 366.6z" fill="#4da324"/>
<path d="M202.0 370.4L204.2 360.1L205.4 370.4z" fill="#4da324"/>
<path d="M168.6 356.8L174.0 348.8L172.0 356.8z" fill="#6cc437"/>
<path d="M185.8 357.6L190.6 344.9L189.2 357.6z" fill="#4a9c22"/>
<path d="M149.5 369.6L148.4 361.9L152.9 369.6z" fill="#6cc437"/>
<path d="M208.2 358.6L208.2 344.0L211.6 358.6z" fill="#4da324"/>
<path d="M137.7 369.7L143.4 359.4L141.1 369.7z" fill="#93dc55"/>
<path d="M210.3 360.3L216.4 344.1L213.7 360.3z" fill="#58ad2b"/>
<path d="M170.1 368.1L170.0 358.1L173.5 368.1z" fill="#a4e36a"/>
<path d="M248.5 361.6L246.1 349.5L251.9 361.6z" fill="#93dc55"/>
<path d="M108.9 378.8L113.5 366.0L112.3 378.8z" fill="#93dc55"/>
<path d="M223.3 360.2L225.6 344.8L226.7 360.2z" fill="#4da324"/>
<path d="M118.6 372.9L123.4 357.4L122.0 372.9z" fill="#7ed047"/>
<path d="M181.6 360.6L188.0 347.9L185.0 360.6z" fill="#a4e36a"/>
<path d="M114.8 375.6L112.3 360.7L118.2 375.6z" fill="#6cc437"/>
<path d="M145.8 353.4L142.8 343.3L149.2 353.4z" fill="#4da324"/>
<path d="M119.7 376.9L123.5 365.7L123.1 376.9z" fill="#4a9c22"/>
<path d="M218.6 359.1L219.2 344.4L222.0 359.1z" fill="#93dc55"/>
<path d="M224.8 356.1L226.4 347.7L228.2 356.1z" fill="#6cc437"/>
<path d="M210.1 368.4L215.1 357.3L213.5 368.4z" fill="#93dc55"/>
<path d="M231.6 364.7L237.2 349.4L235.0 364.7z" fill="#5cb82e"/>
<path d="M182.8 364.7L183.7 349.6L186.2 364.7z" fill="#a4e36a"/>
<path d="M240.8 357.9L243.9 349.3L244.2 357.9z" fill="#4da324"/>
<path d="M152.8 358.0L152.2 345.7L156.2 358.0z" fill="#5cb82e"/>
<path d="M175.1 365.8L173.3 355.8L178.5 365.8z" fill="#4da324"/>
<path d="M240.3 362.8L241.8 355.6L243.7 362.8z" fill="#5cb82e"/>
<path d="M151.6 353.0L154.1 342.4L155.0 353.0z" fill="#4a9c22"/>
<path d="M193.3 352.4L192.8 343.5L196.7 352.4z" fill="#4da324"/>
<path d="M240.1 364.6L246.2 351.4L243.5 364.6z" fill="#4a9c22"/>
<path d="M231.6 359.6L237.9 348.6L235.0 359.6z" fill="#6cc437"/>
<path d="M176.7 352.7L182.9 345.2L180.1 352.7z" fill="#a4e36a"/>
<path d="M249.8 361.7L254.3 347.0L253.2 361.7z" fill="#5cb82e"/>
<path d="M202.6 352.6L204.0 345.5L206.0 352.6z" fill="#93dc55"/>
<path d="M171.9 353.4L177.4 342.2L175.3 353.4z" fill="#a4e36a"/>
<path d="M128.5 366.2L133.9 356.7L131.9 366.2z" fill="#4da324"/>
<path d="M199.6 370.6L201.6 360.9L203.0 370.6z" fill="#4da324"/>
<path d="M189.9 351.3L195.8 342.2L193.3 351.3z" fill="#4da324"/>
<path d="M227.0 351.6L230.8 341.9L230.4 351.6z" fill="#6cc437"/>
<path d="M237.0 362.5L241.2 354.7L240.4 362.5z" fill="#58ad2b"/>
<path d="M108.1 376.8L111.6 367.9L111.5 376.8z" fill="#4a9c22"/>
<path d="M136.1 367.7L134.4 355.4L139.5 367.7z" fill="#58ad2b"/>
<path d="M152.1 358.6L158.8 346.0L155.5 358.6z" fill="#6cc437"/>
<path d="M158.5 366.0L159.2 358.0L161.9 366.0z" fill="#4a9c22"/>
<path d="M215.8 365.2L217.0 357.0L219.2 365.2z" fill="#a4e36a"/>
<path d="M210.6 358.1L208.5 348.2L214.0 358.1z" fill="#5cb82e"/>
<path d="M232.0 365.3L237.7 351.1L235.4 365.3z" fill="#4da324"/>
<path d="M148.3 359.3L148.0 346.9L151.7 359.3z" fill="#93dc55"/>
<path d="M217.0 359.9L215.6 352.0L220.4 359.9z" fill="#a4e36a"/>
<path d="M213.6 354.7L215.9 338.2L217.0 354.7z" fill="#93dc55"/>
<path d="M171.4 357.0L174.4 349.0L174.8 357.0z" fill="#4da324"/>
<path d="M205.6 363.7L206.3 354.9L209.0 363.7z" fill="#4a9c22"/>
<path d="M193.0 349.2L191.3 339.9L196.4 349.2z" fill="#6cc437"/>
<path d="M169.5 367.4L174.4 356.9L172.9 367.4z" fill="#4da324"/>
<path d="M201.1 365.2L201.7 350.0L204.5 365.2z" fill="#93dc55"/>
<path d="M241.7 361.5L244.5 347.2L245.1 361.5z" fill="#93dc55"/>
<path d="M250.6 361.6L253.4 348.0L254.0 361.6z" fill="#5cb82e"/>
<path d="M143.9 356.4L145.0 346.4L147.3 356.4z" fill="#a4e36a"/>
<path d="M135.6 363.5L133.3 353.5L139.0 363.5z" fill="#4da324"/>
<path d="M142.9 365.4L141.9 355.4L146.3 365.4z" fill="#4da324"/>
<path d="M190.3 351.8L197.0 335.4L193.7 351.8z" fill="#7ed047"/>
<path d="M189.3 347.6L193.7 334.0L192.7 347.6z" fill="#4da324"/>
<path d="M141.5 366.7L141.5 352.7L144.9 366.7z" fill="#93dc55"/>
<path d="M144.7 373.4L148.7 361.8L148.1 373.4z" fill="#7ed047"/>
<path d="M239.1 360.7L241.4 348.1L242.5 360.7z" fill="#58ad2b"/>
<path d="M130.2 373.3L130.3 357.3L133.6 373.3z" fill="#4da324"/>
<path d="M123.5 376.1L129.1 366.2L126.9 376.1z" fill="#7ed047"/>
<path d="M217.5 355.4L220.2 346.8L220.9 355.4z" fill="#6cc437"/>
<path d="M172.5 357.5L178.5 342.7L175.9 357.5z" fill="#4da324"/>
<path d="M150.8 366.5L151.3 352.1L154.2 366.5z" fill="#5cb82e"/>
<path d="M128.8 367.7L130.7 360.4L132.2 367.7z" fill="#6cc437"/>
<path d="M189.6 351.2L188.9 339.0L193.0 351.2z" fill="#93dc55"/>
<path d="M113.2 378.2L117.8 364.0L116.6 378.2z" fill="#a4e36a"/>
<path d="M247.3 361.1L248.1 349.4L250.7 361.1z" fill="#a4e36a"/>
<path d="M216.6 358.3L221.6 341.3L220.0 358.3z" fill="#a4e36a"/>
<path d="M227.4 352.5L233.5 344.3L230.8 352.5z" fill="#93dc55"/>
<path d="M183.0 357.7L182.9 341.7L186.4 357.7z" fill="#5cb82e"/>
<path d="M149.1 365.4L149.6 354.1L152.5 365.4z" fill="#93dc55"/>
<path d="M216.6 354.1L214.0 341.1L220.0 354.1z" fill="#6cc437"/>
<path d="M230.3 355.5L236.7 339.7L233.7 355.5z" fill="#4a9c22"/>
<path d="M208.1 359.4L207.9 350.0L211.5 359.4z" fill="#a4e36a"/>
<path d="M244.5 363.1L248.5 346.1L247.9 363.1z" fill="#93dc55"/>
<path d="M233.5 358.8L232.5 343.8L236.9 358.8z" fill="#a4e36a"/>
<path d="M189.2 368.8L193.8 360.8L192.6 368.8z" fill="#6cc437"/>
<path d="M235.9 361.1L235.5 349.5L239.3 361.1z" fill="#58ad2b"/>
<path d="M108.8 376.2L110.0 364.8L112.2 376.2z" fill="#a4e36a"/>
<path d="M126.2 373.4L126.0 364.0L129.6 373.4z" fill="#4a9c22"/>
<path d="M238.3 358.0L244.3 346.1L241.7 358.0z" fill="#4a9c22"/>
<path d="M235.4 356.1L239.0 340.5L238.8 356.1z" fill="#5cb82e"/>
<path d="M134.2 374.2L135.7 363.7L137.6 374.2z" fill="#4da324"/>
<path d="M199.3 363.6L201.4 351.0L202.7 363.6z" fill="#7ed047"/>
<path d="M133.6 375.2L131.4 367.7L137.0 375.2z" fill="#93dc55"/>
<path d="M247.6 359.6L253.1 348.4L251.0 359.6z" fill="#93dc55"/>
<path d="M208.3 369.0L205.8 357.6L211.7 369.0z" fill="#7ed047"/>
<path d="M232.8 354.2L232.2 340.3L236.2 354.2z" fill="#7ed047"/>
<path d="M179.5 354.5L184.2 344.7L182.9 354.5z" fill="#6cc437"/>
<path d="M192.6 352.5L198.6 342.5L196.0 352.5z" fill="#7ed047"/>
<path d="M146.3 366.9L152.8 359.0L149.7 366.9z" fill="#4a9c22"/>
<path d="M241.0 356.4L237.8 340.3L244.4 356.4z" fill="#58ad2b"/>
<path d="M184.8 357.4L183.2 344.7L188.2 357.4z" fill="#7ed047"/>
<path d="M141.7 359.6L140.3 347.2L145.1 359.6z" fill="#4da324"/>
<path d="M251.5 359.9L255.7 348.3L254.9 359.9z" fill="#a4e36a"/>
<path d="M105.7 380.5L103.0 372.9L109.1 380.5z" fill="#93dc55"/>
<path d="M152.8 360.7L152.4 353.4L156.2 360.7z" fill="#4da324"/>
<path d="M193.2 365.4L194.2 357.3L196.6 365.4z" fill="#4a9c22"/>
<path d="M186.4 353.3L190.3 339.1L189.8 353.3z" fill="#58ad2b"/>
<path d="M177.7 352.6L179.4 339.8L181.1 352.6z" fill="#5cb82e"/>
<path d="M135.3 376.8L136.5 369.3L138.7 376.8z" fill="#4da324"/>
<path d="M153.4 364.2L158.2 351.1L156.8 364.2z" fill="#4a9c22"/>
<path d="M212.3 367.0L210.2 359.7L215.7 367.0z" fill="#4da324"/>
<path d="M189.5 360.1L188.6 345.2L192.9 360.1z" fill="#4da324"/>
<path d="M113.3 375.3L118.2 361.3L116.7 375.3z" fill="#58ad2b"/>
<path d="M218.6 358.5L220.4 345.0L222.0 358.5z" fill="#a4e36a"/>
<path d="M143.0 356.2L148.0 342.3L146.4 356.2z" fill="#4a9c22"/>
<path d="M114.3 374.6L113.2 364.0L117.7 374.6z" fill="#5cb82e"/>
<path d="M124.3 374.8L122.4 361.8L127.7 374.8z" fill="#4a9c22"/>
<path d="M182.5 371.5L183.3 364.5L185.9 371.5z" fill="#4da324"/>
<path d="M118.8 374.0L124.9 362.3L122.2 374.0z" fill="#5cb82e"/>
<path d="M205.9 363.9L208.7 347.1L209.3 363.9z" fill="#58ad2b"/>
<path d="M142.8 365.7L144.1 356.3L146.2 365.7z" fill="#7ed047"/>
<path d="M159.2 356.3L162.0 339.5L162.6 356.3z" fill="#5cb82e"/>
<path d="M129.0 370.7L133.1 353.8L132.4 370.7z" fill="#4da324"/>
<path d="M173.8 357.2L174.3 341.7L177.2 357.2z" fill="#5cb82e"/>
<path d="M137.2 363.1L139.4 354.3L140.6 363.1z" fill="#4da324"/>
<path d="M176.4 357.2L180.7 344.3L179.8 357.2z" fill="#4a9c22"/>
<path d="M171.5 373.0L176.8 359.2L174.9 373.0z" fill="#7ed047"/>
<path d="M185.3 357.3L184.7 349.8L188.7 357.3z" fill="#58ad2b"/>
<path d="M197.2 359.3L199.0 344.9L200.6 359.3z" fill="#7ed047"/>
<path d="M145.1 360.2L151.1 351.7L148.5 360.2z" fill="#93dc55"/>
<path d="M125.6 366.2L123.5 350.8L129.0 366.2z" fill="#93dc55"/>
<path d="M229.4 358.9L230.0 343.3L232.8 358.9z" fill="#58ad2b"/>
<path d="M219.4 359.0L220.0 351.5L222.8 359.0z" fill="#7ed047"/>
<path d="M177.6 351.8L175.6 339.6L181.0 351.8z" fill="#7ed047"/>
<path d="M151.5 359.3L149.6 346.9L154.9 359.3z" fill="#58ad2b"/>
<ellipse cx="169" cy="149" rx="115" ry="104" fill="#3d5228"/>
<path d="M158.0 267.0Q125.0 232.0 76.0 177.0" stroke="#6d3413" stroke-width="5" fill="none"/>
<path d="M186.0 267.0Q231.5 222.0 261.0 157.0" stroke="#6d3413" stroke-width="5" fill="none"/>
<path d="M180.0 237.0Q186.0 167.0 176.0 77.0" stroke="#6d3413" stroke-width="4" fill="none"/>
<path d="M126.0 217.0Q96.5 172.0 51.0 107.0" stroke="#6d3413" stroke-width="3" fill="none"/>
<path d="M216.0 217.0Q261.5 212.0 291.0 187.0" stroke="#6d3413" stroke-width="3" fill="none"/>
<path d="M96.0 197.0Q79.0 187.0 46.0 157.0" stroke="#6d3413" stroke-width="3" fill="none"/>
<path d="M176.0 147.0Q209.0 117.0 226.0 67.0" stroke="#6d3413" stroke-width="3" fill="none"/>
<path d="M176.0 157.0Q154.0 122.0 116.0 67.0" stroke="#6d3413" stroke-width="3" fill="none"/>
<use href="#bill3" transform="translate(171.4 182.0) rotate(90) scale(1.08 0.93)"/>
<use href="#bill3" transform="translate(289.1 137.6) rotate(28) scale(1.15 1.20)"/>
<use href="#bill" transform="translate(154.4 195.8) rotate(-23) scale(1.11 0.93)"/>
<use href="#bill" transform="translate(164.6 234.5) rotate(-75) scale(1.13 1.04)"/>
<use href="#bill" transform="translate(242.8 191.5) rotate(44) scale(1.16 1.15)"/>
<use href="#bill3" transform="translate(107.8 152.0) rotate(50) scale(1.10 0.95)"/>
<use href="#bill3" transform="translate(175.9 193.6) rotate(65) scale(1.48 1.50)"/>
<use href="#bill3" transform="translate(90.4 230.3) rotate(-27) scale(1.29 1.14)"/>
<use href="#bill3" transform="translate(145.7 119.1) rotate(52) scale(1.19 1.04)"/>
<use href="#bill3" transform="translate(206.3 59.4) rotate(12) scale(1.11 0.81)"/>
<use href="#bill3" transform="translate(57.0 128.8) rotate(-37) scale(1.40 1.10)"/>
<use href="#bill" transform="translate(72.8 80.5) rotate(-80) scale(1.15 0.99)"/>
<use href="#bill" transform="translate(204.8 246.7) rotate(-7) scale(1.43 1.06)"/>
<use href="#bill3" transform="translate(94.7 195.5) rotate(-62) scale(1.49 1.31)"/>
<use href="#bill3" transform="translate(88.3 78.4) rotate(20) scale(1.44 1.49)"/>
<use href="#bill" transform="translate(191.9 105.8) rotate(-88) scale(1.12 1.10)"/>
<use href="#bill3" transform="translate(148.3 230.3) rotate(38) scale(1.12 0.99)"/>
<use href="#bill" transform="translate(173.6 136.5) rotate(-70) scale(1.19 1.23)"/>
<use href="#bill3" transform="translate(118.3 203.8) rotate(63) scale(1.07 0.91)"/>
<use href="#bill3" transform="translate(150.4 144.5) rotate(-43) scale(1.10 1.12)"/>
<use href="#bill" transform="translate(137.9 104.0) rotate(-2) scale(1.34 1.36)"/>
<use href="#bill3" transform="translate(77.0 203.7) rotate(12) scale(1.28 1.30)"/>
<use href="#bill3" transform="translate(262.2 203.6) rotate(-36) scale(1.38 1.09)"/>
<use href="#bill3" transform="translate(77.3 112.3) rotate(-13) scale(1.26 1.04)"/>
<use href="#bill3" transform="translate(230.9 155.2) rotate(-9) scale(1.07 1.06)"/>
<use href="#bill3" transform="translate(61.8 114.8) rotate(5) scale(1.30 1.09)"/>
<use href="#bill3" transform="translate(95.0 150.3) rotate(-72) scale(1.22 0.99)"/>
<use href="#bill3" transform="translate(253.7 110.3) rotate(-49) scale(1.39 1.21)"/>
<use href="#bill" transform="translate(137.6 202.3) rotate(-17) scale(1.48 1.04)"/>
<use href="#bill3" transform="translate(181.6 176.0) rotate(83) scale(1.21 1.10)"/>
<use href="#bill3" transform="translate(242.3 139.7) rotate(-36) scale(1.32 1.20)"/>
<use href="#bill3" transform="translate(282.3 169.7) rotate(-0) scale(1.28 1.24)"/>
<use href="#bill" transform="translate(203.9 141.3) rotate(-73) scale(1.16 0.92)"/>
<use href="#bill3" transform="translate(215.6 167.6) rotate(-13) scale(1.44 1.21)"/>
<use href="#bill" transform="translate(122.7 217.7) rotate(32) scale(1.09 1.14)"/>
<use href="#bill" transform="translate(150.9 70.5) rotate(-31) scale(1.19 1.18)"/>
<use href="#bill3" transform="translate(75.8 100.0) rotate(26) scale(1.08 1.04)"/>
<use href="#bill" transform="translate(245.4 119.5) rotate(22) scale(1.30 1.33)"/>
<use href="#bill" transform="translate(164.2 165.5) rotate(-86) scale(1.47 1.42)"/>
<use href="#bill" transform="translate(162.3 80.5) rotate(-89) scale(1.38 1.17)"/>
<use href="#bill" transform="translate(258.2 93.0) rotate(87) scale(1.46 1.06)"/>
<use href="#bill3" transform="translate(222.7 213.8) rotate(-11) scale(1.39 1.16)"/>
<use href="#bill" transform="translate(188.6 187.6) rotate(-11) scale(1.10 0.90)"/>
<use href="#bill" transform="translate(254.3 184.7) rotate(-77) scale(1.10 1.09)"/>
<use href="#bill3" transform="translate(222.7 72.9) rotate(9) scale(1.10 0.82)"/>
<use href="#bill3" transform="translate(269.3 172.5) rotate(82) scale(1.30 1.33)"/>
<use href="#bill3" transform="translate(238.8 218.9) rotate(-15) scale(1.29 1.28)"/>
<use href="#bill3" transform="translate(139.6 91.8) rotate(67) scale(1.26 0.90)"/>
<use href="#bill3" transform="translate(105.3 116.0) rotate(-22) scale(1.35 1.39)"/>
<use href="#bill3" transform="translate(119.0 95.9) rotate(34) scale(1.22 1.19)"/>
<use href="#bill3" transform="translate(88.8 113.4) rotate(44) scale(1.12 1.02)"/>
<use href="#bill" transform="translate(119.4 175.4) rotate(-28) scale(1.12 0.92)"/>
<use href="#bill" transform="translate(173.5 148.5) rotate(4) scale(1.22 1.10)"/>
<use href="#bill" transform="translate(145.0 79.6) rotate(-26) scale(1.31 1.14)"/>
<use href="#bill3" transform="translate(135.3 220.6) rotate(-31) scale(1.36 1.07)"/>
<use href="#bill2" transform="translate(227.6 116.9) rotate(41) scale(1.31 1.03)"/>
<use href="#bill" transform="translate(245.3 236.1) rotate(58) scale(1.22 1.16)"/>
<use href="#bill3" transform="translate(230.1 161.9) rotate(21) scale(1.30 1.36)"/>
<use href="#bill" transform="translate(190.5 217.3) rotate(-8) scale(1.27 0.99)"/>
<use href="#bill2" transform="translate(208.0 183.2) rotate(-72) scale(1.19 1.18)"/>
<use href="#bill2" transform="translate(255.3 173.3) rotate(36) scale(1.31 1.17)"/>
<use href="#bill" transform="translate(268.4 140.4) rotate(-63) scale(1.48 1.43)"/>
<use href="#bill2" transform="translate(239.0 201.7) rotate(-72) scale(1.40 1.09)"/>
<use href="#bill" transform="translate(257.6 132.7) rotate(6) scale(1.32 0.98)"/>
<use href="#bill" transform="translate(231.0 83.3) rotate(15) scale(1.45 1.49)"/>
<use href="#bill2" transform="translate(175.0 84.6) rotate(-24) scale(1.48 1.41)"/>
<use href="#bill" transform="translate(151.4 245.1) rotate(64) scale(1.38 1.09)"/>
<use href="#bill" transform="translate(104.9 201.8) rotate(-86) scale(1.29 1.02)"/>
<use href="#bill2" transform="translate(196.4 229.9) rotate(-44) scale(1.11 0.96)"/>
<use href="#bill3" transform="translate(160.5 87.9) rotate(-39) scale(1.17 1.03)"/>
<use href="#bill" transform="translate(255.7 72.6) rotate(-61) scale(1.44 1.44)"/>
<use href="#bill" transform="translate(150.5 106.8) rotate(8) scale(1.38 1.22)"/>
<use href="#bill2" transform="translate(179.1 47.3) rotate(75) scale(1.40 1.11)"/>
<use href="#bill2" transform="translate(182.9 120.7) rotate(79) scale(1.21 1.18)"/>
<use href="#bill3" transform="translate(243.2 162.8) rotate(-8) scale(1.22 1.16)"/>
<use href="#bill" transform="translate(98.3 191.8) rotate(1) scale(1.30 1.07)"/>
<use href="#bill" transform="translate(173.2 95.0) rotate(81) scale(1.10 1.13)"/>
<use href="#bill" transform="translate(269.0 181.1) rotate(-77) scale(1.46 1.07)"/>
<use href="#bill3" transform="translate(193.2 232.6) rotate(-68) scale(1.49 1.21)"/>
<use href="#bill2" transform="translate(233.4 176.5) rotate(-79) scale(1.35 0.98)"/>
<use href="#bill" transform="translate(232.3 225.6) rotate(13) scale(1.49 1.40)"/>
<use href="#bill" transform="translate(254.7 212.3) rotate(51) scale(1.28 0.93)"/>
<use href="#bill" transform="translate(206.9 95.6) rotate(-57) scale(1.29 1.06)"/>
<use href="#bill" transform="translate(75.8 120.4) rotate(-54) scale(1.37 1.16)"/>
<use href="#bill3" transform="translate(140.1 130.8) rotate(-76) scale(1.27 1.14)"/>
<use href="#bill2" transform="translate(167.5 113.3) rotate(11) scale(1.11 0.89)"/>
<use href="#bill3" transform="translate(175.9 35.5) rotate(36) scale(1.47 1.53)"/>
<use href="#bill2" transform="translate(135.8 148.3) rotate(77) scale(1.44 1.48)"/>
<use href="#bill" transform="translate(204.5 198.7) rotate(-2) scale(1.32 1.24)"/>
<use href="#bill" transform="translate(134.4 70.0) rotate(20) scale(1.47 1.07)"/>
<use href="#bill3" transform="translate(272.3 147.2) rotate(83) scale(1.06 0.79)"/>
<use href="#bill" transform="translate(222.0 228.0) rotate(82) scale(1.06 0.75)"/>
<use href="#bill" transform="translate(142.4 255.3) rotate(34) scale(1.28 1.16)"/>
<use href="#bill" transform="translate(120.2 102.1) rotate(55) scale(1.05 0.76)"/>
<use href="#bill2" transform="translate(225.4 146.5) rotate(86) scale(1.43 1.20)"/>
<use href="#bill2" transform="translate(111.7 69.8) rotate(-28) scale(1.06 1.02)"/>
<use href="#bill" transform="translate(122.7 54.2) rotate(15) scale(1.29 1.05)"/>
<use href="#bill" transform="translate(101.2 236.1) rotate(-8) scale(1.16 1.17)"/>
<use href="#bill" transform="translate(270.3 196.3) rotate(-63) scale(1.16 1.01)"/>
<use href="#bill2" transform="translate(143.7 53.6) rotate(-30) scale(1.16 1.08)"/>
<use href="#bill2" transform="translate(231.2 74.7) rotate(4) scale(1.16 1.17)"/>
<use href="#bill" transform="translate(214.6 234.6) rotate(-48) scale(1.19 0.97)"/>
<use href="#bill2" transform="translate(85.9 211.1) rotate(31) scale(1.41 1.25)"/>
<use href="#bill2" transform="translate(174.2 74.1) rotate(47) scale(1.16 0.90)"/>
<use href="#bill3" transform="translate(237.8 100.0) rotate(88) scale(1.22 1.00)"/>
<use href="#bill" transform="translate(214.9 127.6) rotate(88) scale(1.22 0.92)"/>
<use href="#bill" transform="translate(92.2 100.4) rotate(51) scale(1.20 1.17)"/>
<use href="#bill" transform="translate(193.4 152.3) rotate(-38) scale(1.32 1.26)"/>
<use href="#bill" transform="translate(159.7 159.6) rotate(57) scale(1.06 0.92)"/>
<use href="#bill" transform="translate(66.4 186.5) rotate(-78) scale(1.46 1.10)"/>
<use href="#bill2" transform="translate(214.3 119.1) rotate(68) scale(1.48 1.52)"/>
<use href="#bill3" transform="translate(216.4 57.7) rotate(78) scale(1.11 1.06)"/>
<use href="#bill3" transform="translate(207.6 211.6) rotate(-55) scale(1.11 1.04)"/>
<use href="#bill2" transform="translate(191.8 75.6) rotate(41) scale(1.48 1.27)"/>
<use href="#bill2" transform="translate(187.5 97.9) rotate(-68) scale(1.17 1.21)"/>
<use href="#bill2" transform="translate(125.9 123.2) rotate(-57) scale(1.21 0.87)"/>
<use href="#bill" transform="translate(160.5 49.3) rotate(-57) scale(1.11 0.98)"/>
<use href="#bill3" transform="translate(131.6 183.1) rotate(12) scale(1.39 1.23)"/>
<use href="#bill" transform="translate(101.1 213.0) rotate(-75) scale(1.15 0.84)"/>
<use href="#bill2" transform="translate(182.8 137.4) rotate(47) scale(1.47 1.28)"/>
<use href="#bill" transform="translate(103.5 137.9) rotate(-31) scale(1.31 1.05)"/>
<use href="#bill" transform="translate(160.2 220.9) rotate(85) scale(1.26 1.15)"/>
<use href="#bill3" transform="translate(142.9 248.6) rotate(-6) scale(1.14 1.17)"/>
<use href="#bill2" transform="translate(212.3 154.3) rotate(-86) scale(1.39 1.17)"/>
<use href="#bill2" transform="translate(282.5 124.7) rotate(-61) scale(1.13 1.08)"/>
<use href="#bill" transform="translate(84.2 183.0) rotate(-86) scale(1.15 1.13)"/>
<use href="#bill2" transform="translate(181.6 110.2) rotate(28) scale(1.26 0.96)"/>
<use href="#bill" transform="translate(250.7 88.4) rotate(-35) scale(1.07 0.85)"/>
<use href="#bill" transform="translate(184.4 257.4) rotate(-24) scale(1.26 1.16)"/>
<use href="#bill2" transform="translate(275.0 106.6) rotate(-26) scale(1.45 1.31)"/>
<use href="#bill3" transform="translate(235.6 57.5) rotate(7) scale(1.26 1.03)"/>
<use href="#bill3" transform="translate(215.2 89.0) rotate(-48) scale(1.47 1.47)"/>
<use href="#bill" transform="translate(49.4 172.7) rotate(-61) scale(1.28 1.34)"/>
<use href="#bill" transform="translate(127.4 76.3) rotate(-59) scale(1.38 1.08)"/>
<use href="#bill2" transform="translate(257.9 160.4) rotate(-62) scale(1.48 1.18)"/>
<use href="#bill" transform="translate(131.6 47.0) rotate(34) scale(1.21 1.08)"/>
<use href="#bill2" transform="translate(90.3 120.2) rotate(76) scale(1.28 1.07)"/>
<use href="#bill" transform="translate(263.2 114.5) rotate(-1) scale(1.17 1.06)"/>
<use href="#bill2" transform="translate(214.4 107.8) rotate(-7) scale(1.09 0.95)"/>
<use href="#bill" transform="translate(136.5 175.2) rotate(25) scale(1.49 1.19)"/>
<use href="#bill" transform="translate(57.3 152.9) rotate(-75) scale(1.41 1.10)"/>
<use href="#bill" transform="translate(162.6 251.6) rotate(54) scale(1.16 1.18)"/>
<use href="#bill" transform="translate(72.9 171.9) rotate(-13) scale(1.30 1.34)"/>
<use href="#bill" transform="translate(161.2 131.6) rotate(-3) scale(1.18 1.17)"/>
<use href="#bill" transform="translate(206.1 71.4) rotate(-28) scale(1.14 0.88)"/>
<use href="#bill" transform="translate(114.8 122.9) rotate(55) scale(1.49 1.52)"/>
<use href="#bill" transform="translate(74.4 154.1) rotate(54) scale(1.37 1.35)"/>
<use href="#bill2" transform="translate(123.3 164.3) rotate(-58) scale(1.42 1.14)"/>
<use href="#bill2" transform="translate(223.7 103.6) rotate(76) scale(1.06 0.93)"/>
<use href="#bill3" transform="translate(114.1 187.0) rotate(53) scale(1.32 1.35)"/>
<use href="#bill2" transform="translate(101.4 95.5) rotate(26) scale(1.08 1.01)"/>
<use href="#bill2" transform="translate(263.3 79.9) rotate(87) scale(1.44 1.17)"/>
<use href="#bill" transform="translate(85.5 162.2) rotate(35) scale(1.39 1.45)"/>
<use href="#bill3" transform="translate(123.9 140.6) rotate(-67) scale(1.38 0.99)"/>
<use href="#bill" transform="translate(191.5 195.2) rotate(48) scale(1.40 1.41)"/>
<use href="#bill" transform="translate(86.5 141.3) rotate(80) scale(1.34 1.17)"/>
<use href="#bill" transform="translate(109.3 139.8) rotate(-26) scale(1.06 0.80)"/>
<use href="#bill" transform="translate(196.8 170.3) rotate(-49) scale(1.34 1.31)"/>
<use href="#bill2" transform="translate(63.5 162.1) rotate(3) scale(1.19 0.95)"/>
<use href="#bill" transform="translate(152.2 172.0) rotate(27) scale(1.36 1.40)"/>
<use href="#bill3" transform="translate(63.5 142.0) rotate(77) scale(1.46 1.17)"/>
<use href="#bill2" transform="translate(199.1 48.9) rotate(21) scale(1.48 1.44)"/>
<use href="#bill2" transform="translate(224.3 241.6) rotate(-40) scale(1.29 1.12)"/>
<use href="#bill" transform="translate(117.0 251.0) rotate(65) scale(1.29 1.12)"/>
<use href="#bill2" transform="translate(185.3 60.4) rotate(-45) scale(1.14 1.03)"/>
<use href="#bill" transform="translate(177.2 243.8) rotate(-31) scale(1.08 0.78)"/>
<use href="#bill" transform="translate(154.9 192.6) rotate(5) scale(1.48 1.36)"/>
<use href="#bill3" transform="translate(198.4 121.5) rotate(-17) scale(1.16 1.00)"/>
<use href="#bill" transform="translate(146.0 211.6) rotate(-68) scale(1.24 1.17)"/>
<use href="#bill3" transform="translate(96.4 69.5) rotate(10) scale(1.34 1.38)"/>
<use href="#bill" transform="translate(222.9 195.1) rotate(-45) scale(1.29 1.36)"/>
<use href="#bill2" transform="translate(166.9 53.2) rotate(-56) scale(1.39 1.00)"/>
<use href="#bill" transform="translate(221.4 186.1) rotate(9) scale(1.17 1.12)"/>
<use href="#bill" transform="translate(107.2 81.7) rotate(-33) scale(1.40 1.29)"/>
<use href="#bill" transform="translate(178.7 157.5) rotate(-8) scale(1.24 0.92)"/>
<use href="#bill2" transform="translate(116.9 235.3) rotate(82) scale(1.45 1.04)"/>
<use href="#bill2" transform="translate(173.3 211.6) rotate(-42) scale(1.36 1.16)"/>
<use href="#bill" transform="translate(135.0 228.4) rotate(-13) scale(1.31 1.26)"/>
<use href="#bill2" transform="translate(258.8 150.3) rotate(27) scale(1.36 1.24)"/>
<use href="#bill" transform="translate(81.7 197.2) rotate(38) scale(1.11 0.80)"/>
<use href="#bill" transform="translate(105.3 173.3) rotate(-87) scale(1.08 0.91)"/>
<use href="#bill" transform="translate(177.8 226.6) rotate(-71) scale(1.48 1.48)"/>
<use href="#bill2" transform="translate(51.5 133.1) rotate(16) scale(1.19 1.24)"/>
<use href="#bill" transform="translate(146.1 161.0) rotate(-35) scale(1.15 1.15)"/>
<use href="#bill2" transform="translate(225.7 129.6) rotate(-16) scale(1.23 1.24)"/>
<use href="#bill" transform="translate(43.0 275.0) rotate(80) scale(1.00 0.80)"/>
<use href="#bill2" transform="translate(46.0 261.0) rotate(72) scale(0.60 0.48)"/>
<use href="#bill2" transform="translate(152.0 308.0) rotate(20) scale(0.95 0.76)"/>
<use href="#bill" transform="translate(235.0 281.0) rotate(-50) scale(0.55 0.44)"/>
<use href="#bill2" transform="translate(259.0 298.0) rotate(-28) scale(1.10 0.88)"/>
<use href="#bill" transform="translate(276.0 307.0) rotate(30) scale(0.60 0.48)"/>
</g></svg>
<div class="t" style="left:233.500px;top:270.800px;font-size:31px;font-weight:bold;color:#e6000f;letter-spacing:0;-webkit-text-stroke:1.400px #e6000f;transform-origin:0 0;transform:scaleX(1.180)">2</div>
<div class="abs" style="left:256px;top:292px;width:6px;height:6px;background:#7f7f7f"></div>
<div class="t" style="left:274.700px;top:279.200px;font-size:21.600px;color:#c4262e">Antes de comenzar</div>
<div class="q" style="left:239.500px;top:364px">¿Qué significa ahorrar?</div>
<div class="q" style="left:241.500px;top:428px">¿Para qué sirve ahorrar?</div>
<div class="q" style="left:240px;top:490.500px">¿Qué es una meta?</div>
<div class="q" style="left:245px;top:551.500px">¿Quién de ustedes ahorra?</div>
<div class="q" style="left:252.500px;top:612px">¿Es posible ahorrar?</div>
<!-- Sparkasse logo -->
<svg class="abs" style="left:214px;top:674px" width="20" height="22" viewBox="0 0 20 22" fill="#d2232a">
  <circle cx="9" cy="2.800" r="2.300"/>
  <path d="M2 7h14.500v2.600H5.500v1.600h8.500a3 3 0 0 1 3 3v2.800a3 3 0 0 1-3 3H2v-2.700h11.200v-1.700H5a3 3 0 0 1-3-3z"/>
</svg>
<div class="t" style="transform:scaleX(0.9295);transform-origin:0 50%;left:234px;top:686px;font-size:9.800px;color:#c8283a">Finanzgruppe</div>
<div class="t" style="transform:scaleX(0.9612);transform-origin:0 50%;left:234px;top:697.800px;font-size:9.800px;color:#505050">Sparkassenstiftung für</div>
<div class="t" style="transform:scaleX(0.9791);transform-origin:0 50%;left:234px;top:709.300px;font-size:9.800px;color:#505050">internationale Kooperation</div>
<!-- CNBS logo -->
<svg class="abs" style="left:781px;top:673px" width="68" height="50" viewBox="0 0 68 50">
  <rect width="68" height="50" fill="#fff"/>
  <defs><path id="cnarc" d="M19.870 41.130A26.500 17.800 0 1 1 48.890 41.060"/><path id="cnarc2" d="M24 44.800Q34.300 48.800 45 44.800"/>
  <filter id="cb" x="-5%" y="-5%" width="110%" height="110%"><feGaussianBlur stdDeviation=".350"/></filter></defs>
  <g filter="url(#cb)">
  <ellipse cx="34.300" cy="26.200" rx="32.800" ry="23.400" fill="none" stroke="#444" stroke-width=".8"/>
  <ellipse cx="34.300" cy="26.200" rx="24.600" ry="16" fill="none" stroke="#444" stroke-width=".7"/>
  <ellipse cx="34.700" cy="9.800" rx="4.600" ry="2.700" fill="#f0cd1e"/>
  <path d="M29.500 12.500l-2.500 3M32.500 13.500l-.8 3.500M37 13.500l.8 3.500M40 12.500l2.500 3" stroke="#aaa" stroke-width=".5"/>
  <path d="M49 26.500l10 4l-9.500 3z" fill="#0a0a0a"/>
  <path d="M26 36l3 5.500l3-4z" fill="#0a0a0a"/>
  <text x="12.500" y="36.200" font-family="Liberation Sans, sans-serif" font-weight="bold" font-size="15.500" fill="#0a0a0a" stroke="#0a0a0a" stroke-width="1.500" stroke-linejoin="round" textLength="39" lengthAdjust="spacingAndGlyphs">CNBS</text>
  <text font-family="Liberation Sans, sans-serif" font-weight="bold" font-size="5.100" fill="#1a1a1a" textLength="108" lengthAdjust="spacingAndGlyphs"><textPath href="#cnarc" startOffset="0">COMISION NACIONAL DE BANCOS Y SEGUROS</textPath></text>
  </g>
  <text font-family="Liberation Sans, sans-serif" font-weight="bold" font-size="2.600" fill="#222"><textPath href="#cnarc2" startOffset="1">Honduras, C. A.</textPath></text>
</svg>
<!-- name label -->
<div class="abs" style="left:13px;top:691px;width:177px;height:24px;background:rgba(0,0,0,.42);border-radius:4px"></div>
<div class="t" style="transform:scaleX(0.8963);transform-origin:0 50%;left:18.500px;top:696.500px;font-size:13px;color:#fff">Alejandra Carolina Flores Sierra</div>
<!-- chat panel -->
<div id="chat" class="abs"></div>
<!-- messages (bubble 1 is clipped by header) -->
<div class="bubble" style="left:1090px;top:150px;width:231px;height:104px"></div>
<div class="abs" style="left:1048px;top:100px;width:318px;height:59px;background:#1f1f1f"></div>
<div class="abs" style="left:1048px;top:159px;width:318px;height:1px;background:#121212"></div>
<div class="t" style="transform:scaleX(1.0123);transform-origin:0 50%;left:1066.500px;top:124.400px;font-size:16px;font-weight:bold;color:#fff">Chat de la reunión</div>
<svg class="abs" style="left:1323px;top:124px" width="14" height="14" viewBox="0 0 14 14" fill="none" stroke="#e0e0e0" stroke-width="1.100" stroke-linecap="round"><path d="M1.200 1.200l11.600 11.600M12.800 1.200L1.200 12.800"/></svg>

<div class="cav" style="left:1068px;top:166px;background:#fbddd9;color:#8a3e38">DC</div>
<div class="pres" style="left:1088px;top:185.500px;background:#f4fbff"></div>
<div class="mname" style="transform:scaleX(0.8717);transform-origin:0 50%;left:1105.500px;top:167px">DR LUIS MERLO IHSS LA CEIBA</div>
<div class="mname" style="transform:scaleX(0.9133);transform-origin:0 50%;left:1105.500px;top:187px">(Guest) (Invitado)</div>
<div class="mtime" style="transform:scaleX(0.9224);transform-origin:0 50%;left:1213px;top:187px">10:08</div>
<div class="mtext" style="transform:scaleX(0.9249);transform-origin:0 50%;left:1105.200px;top:204px">PUEDEN MANDAR EL LINK DE</div>
<div class="mtext" style="transform:scaleX(0.8920);transform-origin:0 50%;left:1105.500px;top:224px">ASISTENCIA VIA CORREO?</div>

<div class="bubble" style="left:1090px;top:270px;width:218px;height:58px"></div>
<div class="cav" style="left:1068px;top:279.500px;background:#e6e3f2;color:#3f3966">ER</div>
<div class="pres" style="left:1088px;top:300px;background:#d4304e"></div>
<div class="mname" style="transform:scaleX(0.8966);transform-origin:0 50%;left:1105.500px;top:280.600px">Endy Moises Molina Rivers</div>
<div class="mtime" style="transform:scaleX(0.9324);transform-origin:0 50%;left:1262.800px;top:280.600px">10:08</div>
<div class="mtext" style="transform:scaleX(0.8967);transform-origin:0 50%;left:1105.200px;top:298px">ES UN RESULTADO DESEADO</div>

<div class="bubble" style="left:1090px;top:344px;width:231px;height:78px"></div>
<div class="cav" style="left:1068px;top:353.500px;background:#dcf0f4;color:#2c6d74">NS</div>
<div class="pres" style="left:1088px;top:374px;background:#d4304e"></div>
<div class="mname" style="transform:scaleX(0.8975);transform-origin:0 50%;left:1105.500px;top:354.800px">Nelly Alexandra Sosa</div>
<div class="mtime" style="transform:scaleX(0.9324);transform-origin:0 50%;left:1232px;top:354.800px">10:09</div>
<div class="mtext" style="transform:scaleX(0.9683);transform-origin:0 50%;left:1105.200px;top:372px">Buenos dias saludos desde</div>
<div class="mtext" style="transform:scaleX(0.9629);transform-origin:0 50%;left:1105.500px;top:392px">Comayagua</div>

<div class="bubble" style="left:1090px;top:438px;width:231px;height:78px;border-radius:4px 4px 0 0"></div>
<div class="cav" style="left:1068px;top:448px;background:#e1e5da;color:#3a4a2a">SR</div>
<div class="pres" style="left:1088px;top:467.500px;background:#d4304e"></div>
<div class="mname" style="transform:scaleX(0.8992);transform-origin:0 50%;left:1105.500px;top:449px">Stephanie Rodriguez</div>
<div class="mtime" style="transform:scaleX(0.9324);transform-origin:0 50%;left:1230.700px;top:449px">10:09</div>
<div class="mtext" style="transform:scaleX(0.9791);transform-origin:0 50%;left:1105.200px;top:466px">Buenos Dias . Algo que se</div>
<div class="mtext" style="transform:scaleX(1.0278);transform-origin:0 50%;left:1105.200px;top:486px">propone y lograrlo</div>

<div class="bubble" style="left:1090px;top:518px;width:231px;height:92px;border-radius:0 0 4px 4px"></div>
<div class="mtime" style="transform:scaleX(0.9490);transform-origin:0 50%;left:1105.700px;top:525.800px">10:10</div>
<svg class="abs" style="left:1275px;top:522px" width="18" height="18" viewBox="0 0 18 18">
  <path d="M6.500 8.200l2.800-5.400c.4-.9 1.800-.6 1.800.5v3.200h4.200c1 0 1.500.9 1.300 1.700l-1.200 6.200c-.2.900-.9 1.500-1.800 1.500H6.500z" fill="#fbd03c"/>
  <path d="M6.500 8.200l2.800-5.400c.4-.9 1.800-.6 1.800.5v3.200" fill="none" stroke="#d89b1b" stroke-width=".6"/>
  <rect x="1.400" y="7.800" width="5.400" height="8.200" rx="1.400" fill="#fbd03c"/>
  <path d="M11.500 9.500h5M11.300 11.800h4.700M11 14h4.200" stroke="#d89b1b" stroke-width=".6"/>
</svg>
<div class="t" style="left:1298px;top:526px;font-size:12px;font-weight:bold;color:#a6a7f0">1</div>
<div class="mtext" style="transform:scaleX(0.9969);transform-origin:0 50%;left:1105.500px;top:543px">una decisión tomada y se fija un</div>
<div class="mtext" style="transform:scaleX(1.0267);transform-origin:0 50%;left:1105.300px;top:563px">monto ahorrar por cierto</div>
<div class="mtext" style="transform:scaleX(1.0421);transform-origin:0 50%;left:1105.500px;top:583px">tiempo</div>

<!-- scrollbar -->
<div class="abs" style="left:1354px;top:526px;width:10px;height:83px;background:#6e6e6e;border-radius:5px"></div>
<svg class="abs" style="left:1360px;top:558px" width="6" height="19" viewBox="0 0 6 19"><path d="M1.300 1.300L7 6.800V13L1.300 17.500z" fill="#fff" stroke="#111" stroke-width=".9"/></svg>

<!-- compose -->
<div class="abs" style="left:1067px;top:644px;width:279px;height:42px;background:#2b2b2b;border-radius:4px;border:1px solid #191919"></div>
<div class="t" style="transform:scaleX(0.9392);transform-origin:0 50%;left:1084px;top:656px;font-size:14.500px;color:#a8a8a8">Escribe un mensaje nuevo</div>
<!-- compose icons -->
<svg class="abs" style="left:1073px;top:693px" width="20" height="20" viewBox="0 0 20 20" fill="none" stroke="#d6d6d6" stroke-width="1.100" stroke-linecap="round" stroke-linejoin="round">
  <path d="M2 10.500l3.200-8l3.200 8M3.200 7.800h4"/>
  <path d="M15.200 6.200a1.500 1.500 0 0 1 2.200 2.200l-9 9.200l-3.400.8l1-3.200z"/>
</svg>
<svg class="abs" style="left:1105px;top:693px" width="20" height="20" viewBox="0 0 20 20" fill="none" stroke="#d6d6d6" stroke-width="1.100" stroke-linejoin="round">
  <path d="M10 2.300c1.200 0 2 .9 1.900 2.100l-.8 7.800c-.1.700-.5 1-1.100 1s-1-.3-1.100-1l-.8-7.800c-.1-1.200.7-2.100 1.900-2.100z"/>
  <circle cx="10" cy="16.300" r="1.300"/>
</svg>
<svg class="abs" style="left:1137px;top:693px" width="20" height="20" viewBox="0 0 20 20" fill="none" stroke="#d6d6d6" stroke-width="1.100" stroke-linecap="round">
  <circle cx="10" cy="9.800" r="7.700"/>
  <path d="M6.500 11.800c.9 1.400 2 2 3.500 2s2.600-.6 3.500-2"/>
  <circle cx="7.300" cy="7.800" r=".9" fill="#d6d6d6" stroke="none"/><circle cx="12.700" cy="7.800" r=".9" fill="#d6d6d6" stroke="none"/>
</svg>
<svg class="abs" style="left:1169px;top:693px" width="20" height="20" viewBox="0 0 20 20" fill="none" stroke="#d6d6d6" stroke-width="1.100">
  <rect x="2.200" y="3.300" width="15.600" height="13.200" rx="2.600"/>
  <text x="10" y="12.600" font-family="Liberation Sans, sans-serif" font-weight="bold" font-size="7.200" fill="#d6d6d6" stroke="none" text-anchor="middle" letter-spacing=".2">GIF</text>
</svg>
<svg class="abs" style="left:1201px;top:693px" width="20" height="20" viewBox="0 0 20 20" fill="none" stroke="#d6d6d6" stroke-width="1.100" stroke-linecap="round" stroke-linejoin="round">
  <path d="M4.600 2.300h10.800a2.300 2.300 0 0 1 2.300 2.300v7.200l-5.700 5.700H4.600a2.300 2.300 0 0 1-2.300-2.300V4.600a2.300 2.300 0 0 1 2.300-2.300z"/>
  <path d="M17.600 11.800h-3.400a2.300 2.300 0 0 0-2.300 2.300v3.300"/>
  <path d="M6.800 10.600c.8 1.200 1.800 1.700 3.200 1.700s2.400-.5 3.200-1.700"/>
  <circle cx="7.400" cy="7.200" r=".9" fill="#d6d6d6" stroke="none"/><circle cx="12.600" cy="7.200" r=".9" fill="#d6d6d6" stroke="none"/>
</svg>
<svg class="abs" style="left:1234px;top:693px" width="20" height="20" viewBox="0 0 20 20" fill="none" stroke="#d6d6d6" stroke-width="1.100" stroke-linecap="round" stroke-linejoin="round">
  <path d="M5.200 2.800l12.600 7l-12.600 7l2-7z"/><path d="M7.200 9.800h5.600"/>
  <path d="M2.200 6.200l1.200 3.600l-1.200 3.600"/>
</svg>
<svg class="abs" style="left:1265px;top:693px" width="20" height="20" viewBox="0 0 20 20" fill="#d6d6d6"><circle cx="4.800" cy="9.800" r="1.200"/><circle cx="10" cy="9.800" r="1.200"/><circle cx="15.200" cy="9.800" r="1.200"/></svg>
<svg class="abs" style="left:1320px;top:693px" width="20" height="20" viewBox="0 0 20 20" fill="none" stroke="#c8c8c8" stroke-width="1.100" stroke-linecap="round" stroke-linejoin="round">
  <path d="M2.300 2.600l15.700 7.200l-15.700 7.200l2.800-7.200z"/><path d="M5.100 9.800h7.500"/>
</svg>
<!-- taskbar -->
<div id="taskbar" class="abs">
  <svg class="abs" style="left:960px;top:0" width="240" height="40" viewBox="0 0 240 40">
    <defs><linearGradient id="gh" x1="0" y1="0" x2="1" y2="0"><stop offset="0" stop-color="#2e2e2e"/><stop offset=".6" stop-color="#2c2c2c"/><stop offset="1" stop-color="#262626"/></linearGradient></defs>
    <path d="M19 0L25 32L210 1.600V0z" fill="url(#gh)"/>
    <path d="M25 32.800L210 2.400" stroke="#1c1c1c" stroke-width="1.200" opacity=".7"/>
    <text x="31" y="26" font-family="Liberation Sans, sans-serif" font-size="18.500" fill="#161616" textLength="110" lengthAdjust="spacingAndGlyphs" transform="rotate(-11 31 26)">#SEGUROmet</text>
  </svg>
  <div class="abs" style="left:245px;top:0;width:44px;height:40px;background:#494949"></div>
  <div class="abs" style="left:289px;top:0;width:3px;height:40px;background:#3a3a3a"></div>
  <div class="abs" style="left:245px;top:38px;width:47px;height:2px;background:#76b9ed"></div>
  <div class="abs" style="left:298px;top:38px;width:40px;height:2px;background:#76b9ed"></div>
  <!-- windows -->
  <svg class="abs" style="left:15px;top:11px" width="18" height="18" viewBox="0 0 18 18" fill="#fff"><path d="M.8 3.200l6.600-1v6.300H.8zM8.300 2.100L17.300.7v7.800h-9zM.8 9.400h6.600v6.300l-6.600-1zM8.300 9.400h9v7.800l-9-1.400z"/></svg>
  <!-- search -->
  <svg class="abs" style="left:62px;top:10px" width="22" height="22" viewBox="0 0 22 22" fill="none" stroke="#fff" stroke-width="1.400" stroke-linecap="round"><circle cx="12.400" cy="7.800" r="5"/><path d="M8.900 11.500l-6.400 6.300"/></svg>
  <!-- task view -->
  <svg class="abs" style="left:108px;top:11px" width="24" height="18" viewBox="0 0 24 18" fill="none" stroke="#fff" stroke-width="1.300"><rect x="6.200" y="2.300" width="11.600" height="13"/><path d="M4.200 4.600H2.100v8.400h2.100M19.800 4.600h2.100v8.400h-2.100"/></svg>
  <!-- explorer -->
  <svg class="abs" style="left:159px;top:9px" width="24" height="22" viewBox="0 0 24 22">
    <path d="M1.200 2.400c0-.6.400-1 1-1h6.200l1.800 2h11.600c.6 0 1 .4 1 1v13.600H1.200z" fill="#f4cf6a"/>
    <path d="M1.200 5.400h21.600v12.600H1.200z" fill="#fbe08a"/>
    <path d="M4.600 12.200h14.800v7.800h-3.700v-4.200H8.300v4.200H4.600z" fill="#3aa5df"/>
    <path d="M4.600 12.200h14.800v1.800H4.600z" fill="#2a8fce"/>
  </svg>
  <!-- outlook -->
  <svg class="abs" style="left:207px;top:8px" width="25" height="24" viewBox="0 0 25 24">
    <rect x="11" y="5.200" width="13" height="13.400" fill="#0a64b4"/>
    <path d="M12.500 7.400h10v9h-10z" fill="#fff"/>
    <path d="M12.500 7.400l5 4.800l5-4.800" fill="none" stroke="#0a64b4" stroke-width="1.500"/>
    <path d="M1 3.200L14 .8v22.400L1 20.800z" fill="#0072c6"/>
    <ellipse cx="7.600" cy="12" rx="3" ry="3.900" fill="none" stroke="#fff" stroke-width="1.900"/>
  </svg>
  <!-- teams -->
  <svg class="abs" style="left:255px;top:8px" width="30" height="26" viewBox="0 0 30 26">
    <circle cx="15.500" cy="5.800" r="3.800" fill="#5a62c8"/>
    <circle cx="23.300" cy="7.400" r="2.700" fill="#4f57bf"/>
    <path d="M10.500 10.800h11v8.200c0 3-2.400 5-5.500 5s-5.500-2-5.500-5z" fill="#5a62c8"/>
    <path d="M19.500 10.800h7.200c.5 0 .9.400.9.900v5.300c0 2.400-1.800 4-4 4s-4.100-1.600-4.100-4z" fill="#4f57bf"/>
    <rect x="1.500" y="5.400" width="15" height="14.600" rx="1.400" fill="#464eb8"/>
    <path d="M5 9h8v2.100h-2.900v6.600H7.900v-6.600H5z" fill="#fff"/>
    <circle cx="21.200" cy="19.300" r="6.300" fill="#cc2038"/>
  </svg>
  <div class="t" style="left:273px;top:21.500px;font-size:11px;font-weight:bold;color:#fff">6</div>
  <!-- chrome -->
  <svg class="abs" style="left:306px;top:9px" width="24" height="24" viewBox="0 0 24 24">
    <circle cx="12" cy="12" r="11" fill="#fbc116"/>
    <path d="M12 12L2.500 6.500A11 11 0 0 1 21.500 6.500z" fill="#e94235"/>
    <path d="M2.470 6.500A11 11 0 0 1 21.530 6.500H12z" fill="#e94235"/>
    <path d="M2.470 6.500A11 11 0 0 0 12 23L16.760 14.750L12 12z" fill="#2da94f"/>
    <path d="M2.470 6.500L7.240 14.750L12 12z" fill="#2da94f"/>
    <circle cx="12" cy="12" r="5.200" fill="#fff"/>
    <circle cx="12" cy="12" r="4.100" fill="#4086f4"/>
  </svg>
  <!-- tray -->
  <svg class="abs" style="left:1133px;top:14px" width="16" height="12" viewBox="0 0 16 12" fill="none" stroke="#fff" stroke-width="1.300"><path d="M1.500 9.300L8 3l6.500 6.300"/></svg>
  <svg class="abs" style="left:1156px;top:11px" width="18" height="18" viewBox="0 0 18 18">
    <path d="M4.600 7.500V5.200a3.400 3.400 0 0 1 6.800 0v2.300" fill="none" stroke="#e8e8e8" stroke-width="1.500"/>
    <rect x="1.800" y="7" width="12.400" height="9.400" rx="1" fill="#f2c230"/>
    <rect x="7" y="10" width="2" height="3.400" fill="#8a6a10"/>
    <circle cx="13.500" cy="14" r="3.300" fill="#e4e4e4" stroke="#555" stroke-width=".7"/>
    <path d="M11.500 16l4-4" stroke="#555" stroke-width=".9"/>
  </svg>
  <svg class="abs" style="left:1181px;top:15px" width="18" height="11" viewBox="0 0 18 11" fill="none" stroke="#fff" stroke-width="1.100"><rect x="1" y="1.200" width="14.200" height="8.200" rx=".8"/><rect x="3" y="3.200" width="7" height="4.200" fill="#fff" stroke="none"/><path d="M16.400 3.600v3.400" stroke-width="1.400"/></svg>
  <svg class="abs" style="left:1204px;top:12px" width="19" height="17" viewBox="0 0 19 17" fill="none" stroke="#fff" stroke-width="1.100" stroke-linecap="round" stroke-linejoin="round">
    <path d="M1.400 6.200h2.800l3.600-3.600v11.800l-3.600-3.600H1.400z"/>
    <path d="M10.400 6.200c1 1.300 1 3.300 0 4.600M12.800 4.200c2 2.400 2 6.200 0 8.600M15.200 2.200c3 3.600 3 9 0 12.600"/>
  </svg>
  <svg class="abs" style="left:1228px;top:11px" width="18" height="17" viewBox="0 0 18 17" fill="none" stroke="#fff" stroke-width="1.100">
    <rect x="4.200" y="2.300" width="12.400" height="8.600"/><path d="M10.400 10.900v3.600M6.400 14.700h8"/>
    <rect x="1" y="1" width="4.400" height="4" fill="#252525"/><path d="M1 3h4.400M3.200 1v4"/>
  </svg>
  <div class="t" style="transform:scaleX(0.9057);transform-origin:0 50%;left:1267.200px;top:5.500px;font-size:12px;color:#fff">10:05</div>
  <div class="t" style="transform:scaleX(0.9871);transform-origin:0 50%;left:1254.700px;top:23.500px;font-size:12px;color:#fff">20/5/2022</div>
  <svg class="abs" style="left:1324px;top:11px" width="18" height="18" viewBox="0 0 18 18" fill="none" stroke="#fff" stroke-width="1.200" stroke-linejoin="miter"><path d="M1.400 1.600h15.200v11H12.200L9 15.800L5.800 12.600H1.400z"/></svg>
</div>
</body>
</html>
